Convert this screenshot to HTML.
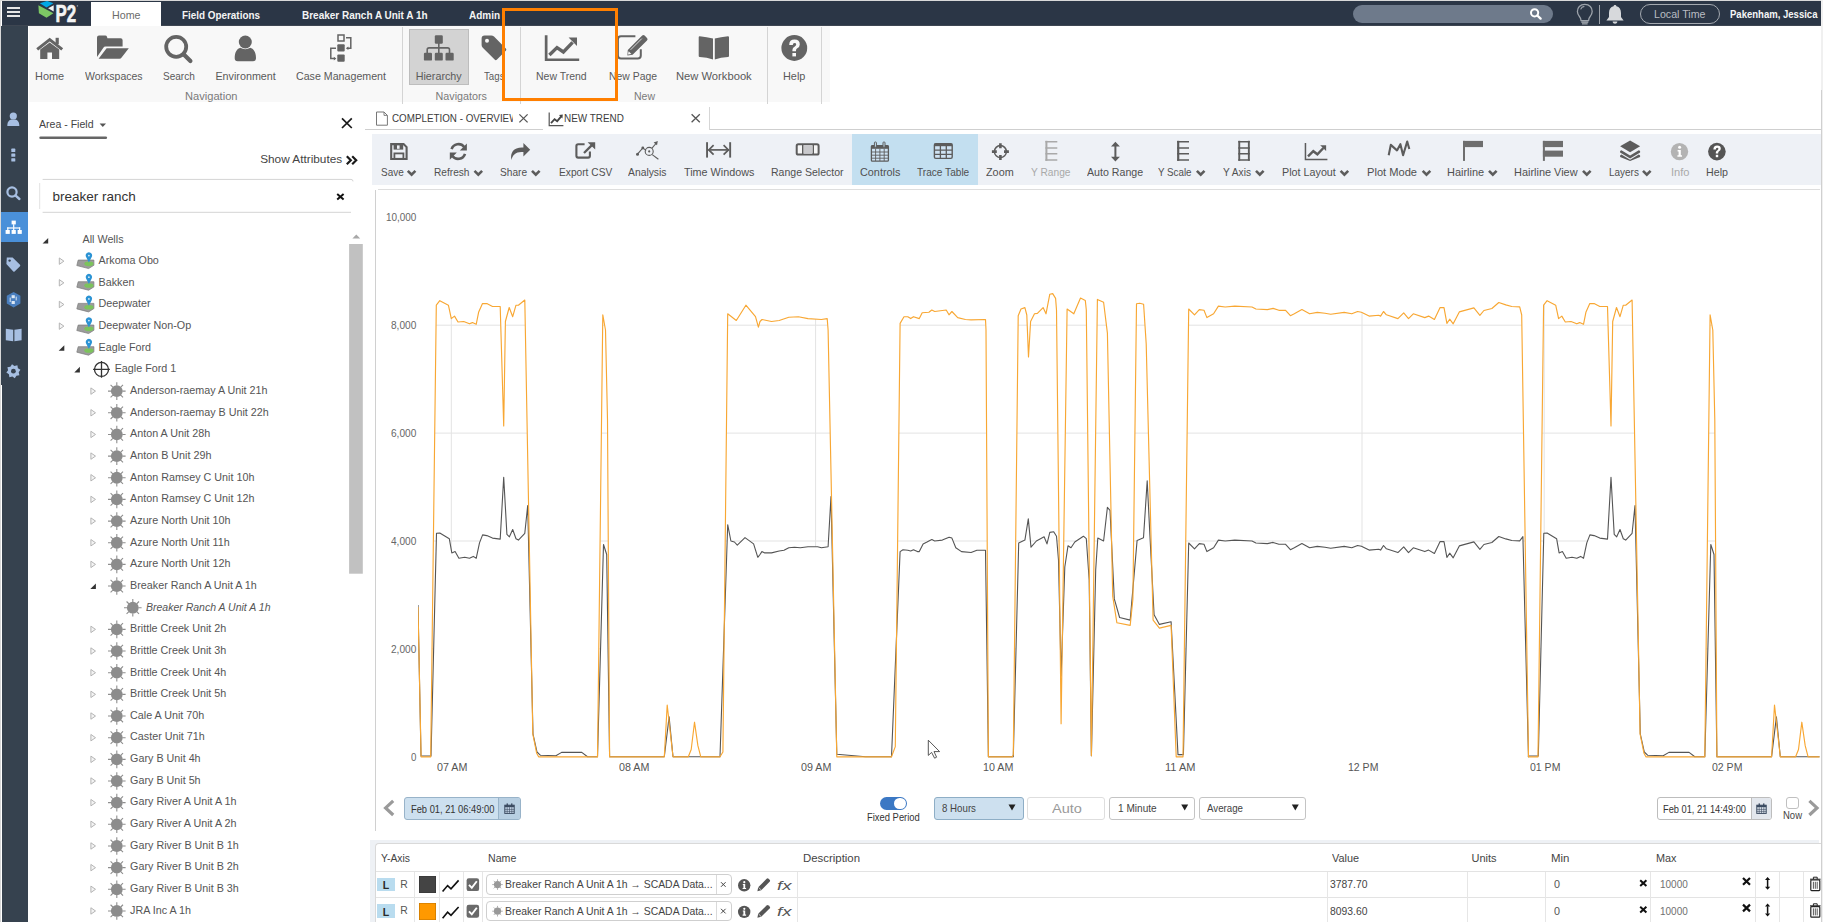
<!DOCTYPE html>
<html><head><meta charset="utf-8"><title>P2 Explorer - New Trend</title>
<style>
html,body{margin:0;padding:0;}
body{width:1823px;height:922px;overflow:hidden;position:relative;background:#fff;font-family:"Liberation Sans",sans-serif;}
.t{position:absolute;white-space:nowrap;line-height:1;transform-origin:0 0;}
.r{position:absolute;display:block;}
</style></head><body>

<div class="r" style="left:0px;top:0px;width:1823px;height:922px;background:#fff;"></div>
<div class="r" style="left:2px;top:1px;width:1819px;height:25px;background:#2b3646;"></div>
<div class="r" style="left:0px;top:0px;width:1823px;height:1px;background:#d9d9d9;"></div>
<div class="r" style="left:2px;top:25px;width:1819px;height:1px;background:#3e4652;"></div>
<div class="r" style="left:7px;top:6.5px;width:13px;height:2px;background:#e6e6e6;"></div>
<div class="r" style="left:7px;top:11px;width:13px;height:2px;background:#e6e6e6;"></div>
<div class="r" style="left:7px;top:15.3px;width:13px;height:2px;background:#e6e6e6;"></div>
<svg class="r" style="left:36px;top:0px;" width="46" height="26" viewBox="0 0 46 26">
<polygon points="3.9,3.3 11.1,0.9 17.4,3.3 10.5,7.6" fill="#00a7e6"/>
<polygon points="2.4,5.3 17.4,13.2 10.5,17.8 2.9,13.2" fill="#7dc864"/>
<polygon points="12.1,8.2 17.7,5.3 17.7,11.5" fill="#f4f4f4"/>
<text x="19.6" y="22" font-family="Liberation Sans" font-weight="bold" font-size="23.6" fill="#f4f4f4" stroke="#f4f4f4" stroke-width="0.7" textLength="20.6" lengthAdjust="spacingAndGlyphs">P2</text>
<circle cx="41.4" cy="5.9" r="0.8" fill="#8a9099"/>
</svg>
<div class="r" style="left:91px;top:2px;width:70px;height:25px;background:#fff;"></div>
<div class="t" style="left:111.55px;top:9.67px;font-size:10.9px;color:#6b6b6b;transform:scaleX(0.9803);">Home</div>
<div class="t" style="left:181.70px;top:9.67px;font-size:10.9px;color:#f4f4f4;font-weight:bold;transform:scaleX(0.9070);">Field Operations</div>
<div class="t" style="left:301.50px;top:9.67px;font-size:10.9px;color:#f4f4f4;font-weight:bold;transform:scaleX(0.9169);">Breaker Ranch A Unit A 1h</div>
<div class="t" style="left:468.70px;top:9.67px;font-size:10.9px;color:#f4f4f4;font-weight:bold;transform:scaleX(0.9172);">Admin</div>
<div class="r" style="left:1353px;top:4.6px;width:200px;height:18.4px;background:#6e7a8b;border-radius:10px;"></div>
<svg class="r" style="left:1529px;top:7px;" width="14" height="14" viewBox="0 0 14 14"><circle cx="5.6" cy="5.8" r="3.6" fill="none" stroke="#fff" stroke-width="2"/><line x1="8.3" y1="8.5" x2="11.6" y2="11.6" stroke="#fff" stroke-width="2.4" stroke-linecap="round"/></svg>
<svg class="r" style="left:1575px;top:3px;" width="20" height="22" viewBox="0 0 20 22"><path d="M9.8 1.4 C5 1.4 2.4 4.8 2.4 8.4 C2.4 11.6 4.6 13.2 5.6 15.4 L6 17.6 L13.6 17.6 L14 15.4 C15 13.2 17.2 11.6 17.2 8.4 C17.2 4.8 14.6 1.4 9.8 1.4 Z" fill="none" stroke="#9da3ab" stroke-width="1.3"/><path d="M5.6 6.4 C6.2 4.6 7.8 3.6 9.4 3.4" fill="none" stroke="#9da3ab" stroke-width="1.1"/><rect x="6.3" y="18.3" width="7" height="1.6" fill="#9da3ab"/><rect x="7" y="20.2" width="5.6" height="1.3" fill="#9da3ab"/></svg>
<div class="r" style="left:1599px;top:4.5px;width:1px;height:19px;background:#9aa0a8;"></div>
<svg class="r" style="left:1604px;top:3px;" width="22" height="22" viewBox="0 0 22 22"><path d="M11 2 C11.9 2 12.4 2.6 12.4 3.3 C15.5 4 17 6.6 17 10 L17 14 L19.6 17.6 L2.4 17.6 L5 14 L5 10 C5 6.6 6.5 4 9.6 3.3 C9.6 2.6 10.1 2 11 2 Z" fill="#d7d9dc"/><path d="M8.6 18.6 C8.8 20 9.8 20.8 11 20.8 C12.2 20.8 13.2 20 13.4 18.6 Z" fill="#d7d9dc"/></svg>
<div class="r" style="left:1640px;top:4.2px;width:78px;height:18.6px;background:transparent;border:1.2px solid #a4a9b0;border-radius:10px;box-sizing:border-box;width:80px;height:19.6px;"></div>
<div class="t" style="left:1654.45px;top:8.77px;font-size:10.9px;color:#b9bdc3;transform:scaleX(0.9772);">Local Time</div>
<div class="t" style="left:1730.00px;top:8.77px;font-size:10.9px;color:#f6f6f6;font-weight:bold;transform:scaleX(0.8752);">Pakenham, Jessica</div>
<div class="r" style="left:1.2px;top:26px;width:27.1px;height:896px;background:#36424f;"></div>
<div class="r" style="left:0px;top:0px;width:1.2px;height:922px;background:#d8d8d8;"></div>
<div class="r" style="left:1.2px;top:384.7px;width:0.8px;height:538px;background:#fff;"></div>
<div class="r" style="left:1821px;top:0px;width:2px;height:922px;background:#f0f0f0;"></div>
<svg class="r" style="left:2px;top:108px;" width="26" height="22" viewBox="0 0 26 22"><circle cx="11.3" cy="8" r="3.6" fill="#a7bfe2"/><path d="M5.3 18 C5.3 13.6 7.4 11.8 9.4 11.6 L13.2 11.6 C15.2 11.8 17.3 13.6 17.3 18 Z" fill="#a7bfe2"/></svg>
<svg class="r" style="left:2px;top:146px;" width="26" height="18" viewBox="0 0 26 18"><rect x="9.3" y="2.6" width="4" height="3.4" rx="0.6" fill="#a7bfe2"/><rect x="9.3" y="7.4" width="4" height="3.4" rx="0.6" fill="#a7bfe2"/><rect x="9.3" y="12.2" width="4" height="3.4" rx="0.6" fill="#a7bfe2"/></svg>
<svg class="r" style="left:2px;top:184px;" width="26" height="18" viewBox="0 0 26 18"><circle cx="10" cy="8" r="4.6" fill="none" stroke="#a7bfe2" stroke-width="2.2"/><line x1="13.4" y1="11.4" x2="17.4" y2="15" stroke="#a7bfe2" stroke-width="2.4" stroke-linecap="round"/></svg>
<div class="r" style="left:1.2px;top:212px;width:27.1px;height:30px;background:#4a90d9;"></div>
<svg class="r" style="left:2px;top:218px;" width="26" height="20" viewBox="0 0 26 20"><rect x="9.6" y="2.6" width="4.2" height="3.8" fill="#fff"/><rect x="11.1" y="6.2" width="1.2" height="3.4" fill="#fff"/><rect x="5.2" y="9.4" width="13" height="1.2" fill="#fff"/><rect x="5.2" y="9.4" width="1.2" height="3" fill="#fff"/><rect x="17" y="9.4" width="1.2" height="3" fill="#fff"/><rect x="11.1" y="9.4" width="1.2" height="3" fill="#fff"/><rect x="3.6" y="12" width="4.2" height="3.9" fill="#fff"/><rect x="9.6" y="12" width="4.2" height="3.9" fill="#fff"/><rect x="15.6" y="12" width="4.2" height="3.9" fill="#fff"/></svg>
<svg class="r" style="left:2px;top:254px;" width="26" height="20" viewBox="0 0 26 20"><path d="M4.8 3.6 L10.6 3.4 L18 10.8 Q18.6 11.5 18 12.2 L12.6 17.4 Q12 18 11.3 17.4 L4.4 10 Z" fill="#a7bfe2"/><circle cx="7.6" cy="6.6" r="1.2" fill="#36424f"/></svg>
<svg class="r" style="left:2px;top:290px;" width="26" height="20" viewBox="0 0 26 20"><polygon points="11.6,2 18.4,5.8 18.4,13.6 11.6,17.4 4.8,13.6 4.8,5.8" fill="#4a7fbf"/><rect x="9.6" y="5.2" width="3.2" height="3" fill="#dce8f5"/><rect x="9.6" y="11" width="3.2" height="3" fill="#dce8f5"/><path d="M8.2 7.6 L8.2 12 M14.2 6.6 L14.2 10.4" stroke="#dce8f5" stroke-width="1"/></svg>
<svg class="r" style="left:2px;top:326px;" width="26" height="18" viewBox="0 0 26 18"><path d="M3.8 2.8 L11.2 3.8 L11.2 15.2 L3.8 14.2 Z" fill="#a7bfe2"/><path d="M12.4 3.8 L19.6 2.8 L19.6 14.2 L12.4 15.2 Z" fill="#a7bfe2"/></svg>
<svg class="r" style="left:2px;top:362px;" width="26" height="20" viewBox="0 0 26 20"><polygon points="18.46,7.80 16.70,10.25 17.39,13.20 14.40,13.69 12.80,16.26 10.35,14.50 7.40,15.19 6.91,12.20 4.34,10.60 6.10,8.15 5.41,5.20 8.40,4.71 10.00,2.14 12.45,3.90 15.40,3.21 15.89,6.20" fill="#a7bfe2"/><circle cx="11.4" cy="9.2" r="2.4" fill="#36424f"/></svg>
<div class="r" style="left:28.5px;top:26px;width:801px;height:75.8px;background:#f8f8f8;"></div>
<div class="r" style="left:402.0px;top:27px;width:1px;height:77px;background:#d4d4d4;"></div>
<div class="r" style="left:519.6px;top:27px;width:1px;height:77px;background:#d4d4d4;"></div>
<div class="r" style="left:767.0px;top:27px;width:1px;height:77px;background:#d4d4d4;"></div>
<div class="r" style="left:821.1px;top:27px;width:1px;height:77px;background:#d4d4d4;"></div>
<div class="r" style="left:409px;top:29.2px;width:60px;height:56.2px;background:#d3d3d3;border:1px solid #bdbdbd;box-sizing:border-box;"></div>
<div class="t" style="left:35.45px;top:70.90px;font-size:10.75px;color:#5a5a5a;transform:scaleX(1.0149);">Home</div>
<div class="t" style="left:84.80px;top:70.90px;font-size:10.75px;color:#5a5a5a;transform:scaleX(0.9772);">Workspaces</div>
<div class="t" style="left:162.70px;top:70.90px;font-size:10.75px;color:#5a5a5a;transform:scaleX(0.9337);">Search</div>
<div class="t" style="left:215.45px;top:70.90px;font-size:10.75px;color:#5a5a5a;">Environment</div>
<div class="t" style="left:296.10px;top:70.90px;font-size:10.75px;color:#5a5a5a;transform:scaleX(0.9909);">Case Management</div>
<div class="t" style="left:415.70px;top:70.90px;font-size:10.75px;color:#5a5a5a;">Hierarchy</div>
<div class="t" style="left:484.25px;top:70.90px;font-size:10.75px;color:#5a5a5a;transform:scaleX(0.9028);">Tags</div>
<div class="t" style="left:536.45px;top:70.90px;font-size:10.75px;color:#5a5a5a;transform:scaleX(0.9754);">New Trend</div>
<div class="t" style="left:608.60px;top:70.90px;font-size:10.75px;color:#5a5a5a;transform:scaleX(0.9678);">New Page</div>
<div class="t" style="left:676.45px;top:70.90px;font-size:10.75px;color:#5a5a5a;transform:scaleX(1.0415);">New Workbook</div>
<div class="t" style="left:783.00px;top:70.90px;font-size:10.75px;color:#5a5a5a;transform:scaleX(1.0132);">Help</div>
<div class="t" style="left:184.75px;top:90.60px;font-size:10.75px;color:#7a7a7a;transform:scaleX(1.0336);">Navigation</div>
<div class="t" style="left:435.55px;top:90.60px;font-size:10.75px;color:#7a7a7a;">Navigators</div>
<div class="t" style="left:633.60px;top:90.60px;font-size:10.75px;color:#7a7a7a;transform:scaleX(0.9765);">New</div>
<svg class="r" style="left:0;top:0" width="1823" height="922" viewBox="0 0 1823 922">
<g fill="#646464" stroke="none">
 <!-- home -->
 <polyline points="37.2,49.4 49.7,39.6 62.2,49.4" fill="none" stroke="#646464" stroke-width="3" stroke-linejoin="miter"/>
 <rect x="55.6" y="37.8" width="3.2" height="6.4"/>
 <path d="M40.2 49.6 L49.7 42.6 L59.2 49.6 L59.2 59 L52 59 L52 52.4 L47.4 52.4 L47.4 59 L40.2 59 Z"/>
 <!-- workspaces folder -->
 <path d="M97 37.4 Q97 35.4 99 35.4 L105.2 35.4 Q106.6 35.4 107 36.8 L107.4 38.2 L120.6 38.2 Q122.6 38.2 122.6 40.2 L122.6 46.6 L105.6 46.6 Q104 46.6 103.2 48 L97 57 Z"/>
 <path d="M106.6 48.2 L128.8 48.2 L121.6 57.6 Q120.8 58.8 119.4 58.8 L98.6 58.8 Z"/>
 <!-- search -->
 <circle cx="176.2" cy="46.8" r="10" fill="none" stroke="#646464" stroke-width="3.8"/>
 <line x1="183.6" y1="54.2" x2="190.4" y2="61" stroke="#646464" stroke-width="4.2" stroke-linecap="round"/>
 <!-- environment -->
 <circle cx="245.3" cy="42" r="6.5"/>
 <path d="M234.7 58.2 C234.7 52 237.2 48.6 240.4 47.8 C243.2 49.6 247.4 49.6 250.2 47.8 C253.4 48.6 256 52 256 58.2 Q256 61.2 253 61.2 L237.7 61.2 Q234.7 61.2 234.7 58.2 Z"/>
 <!-- case management -->
 <rect x="338" y="35" width="6" height="6" fill="none" stroke="#646464" stroke-width="1.5"/>
 <rect x="337.3" y="44.2" width="7.4" height="7.2" rx="1"/>
 <rect x="337.3" y="54.4" width="7.4" height="7.4" rx="1"/>
 <path d="M346 37.8 L350.8 37.8 L350.8 48.2 L347.6 48.2" fill="none" stroke="#646464" stroke-width="1.5"/>
 <path d="M345.8 48.2 L348.4 46.4 L348.4 50 Z"/>
 <path d="M336 48.2 L330.8 48.2 L330.8 58.6 L334.4 58.6" fill="none" stroke="#646464" stroke-width="1.5"/>
 <path d="M336.4 58.6 L333.8 56.8 L333.8 60.4 Z"/>
 <!-- hierarchy -->
 <rect x="434.8" y="35.3" width="8" height="8.4" rx="1.2"/>
 <rect x="438" y="43" width="1.6" height="5.4"/>
 <path d="M427.2 53.4 L427.2 49.8 Q427.2 47.9 429.1 47.9 L447.6 47.9 Q449.5 47.9 449.5 49.8 L449.5 53.4" fill="none" stroke="#646464" stroke-width="1.6"/>
 <rect x="438" y="47.9" width="1.6" height="5.4"/>
 <rect x="423.9" y="52.8" width="8.1" height="7.8" rx="1.2"/>
 <rect x="434.8" y="52.8" width="8" height="7.8" rx="1.2"/>
 <rect x="445.5" y="52.8" width="8.2" height="7.8" rx="1.2"/>
 <!-- tags -->
 <path d="M481.6 38.4 Q481.6 35.4 484.6 35.4 L491.2 35.4 Q492.8 35.4 494 36.6 L505.8 48.4 Q507 49.6 505.8 50.8 L497 59.6 Q495.8 60.8 494.6 59.6 L482.8 47.8 Q481.6 46.6 481.6 45 Z"/>
 <circle cx="487" cy="40.8" r="2" fill="#f8f8f8"/>
 <!-- new trend -->
 <path d="M544.8 35.3 L547.5 35.3 L547.5 58.4 L579.2 58.4 L579.2 61 L544.8 61 Z"/>
 <polyline points="549.4,55 557,47.6 563.4,52 572.6,42.4" fill="none" stroke="#646464" stroke-width="3.4" stroke-linejoin="miter"/>
 <path d="M568.6 37.6 L577 37.6 L577 46 Z"/>
 <!-- new page -->
 <path d="M635.4 36.3 L621 36.3 Q617.9 36.3 617.9 39.4 L617.9 55.5 Q617.9 58.6 621 58.6 L637.7 58.6 Q640.8 58.6 640.8 55.5 L640.8 49.2" fill="none" stroke="#646464" stroke-width="2"/>
 <path d="M627.8 50 L642.2 35.6 Q643.4 34.4 644.6 35.6 L647 38 Q648.2 39.2 647 40.4 L632.6 54.8 L627.4 55.4 Z"/>
 <path d="M628.6 51.2 L631.4 54 L628 54.6 Z" fill="#f8f8f8"/>
 <line x1="630.6" y1="49.8" x2="641.8" y2="38.6" stroke="#f8f8f8" stroke-width="0.8"/>
 <!-- new workbook -->
 <path d="M698.7 37.2 Q698.7 36.2 699.7 36.2 Q707 36.8 713 38.6 L713 59.6 Q707 57.4 699.7 57 Q698.7 57 698.7 56 Z"/>
 <path d="M729 37.2 Q729 36.2 728 36.2 Q720.7 36.8 714.8 38.6 L714.8 59.6 Q720.7 57.4 728 57 Q729 57 729 56 Z"/>
 <!-- help -->
 <circle cx="794.3" cy="48" r="12.9"/>
 <path d="M789.2 45 Q789.2 39.6 794.6 39.6 Q799.8 39.6 799.8 44.4 Q799.8 47 797 48.4 Q796 49 796 50.4 L796 51.2 L792.4 51.2 L792.4 50 Q792.4 47.6 794.8 46.4 Q796.2 45.6 796.2 44.4 Q796.2 43 794.6 43 Q792.8 43 792.8 45 Z" fill="#f8f8f8"/>
 <rect x="792.4" y="53" width="3.6" height="3.4" fill="#f8f8f8"/>
</g>
<rect x="503.5" y="9.5" width="113" height="90" fill="none" stroke="#ff7f00" stroke-width="3"/>
</svg>
<div class="t" style="left:39.40px;top:118.90px;font-size:10.75px;color:#444;transform:scaleX(0.9810);">Area - Field</div>
<div class="t" style="left:260.20px;top:154.31px;font-size:11.8px;color:#444;">Show Attributes</div>
<div class="t" style="left:52.40px;top:190.27px;font-size:13.5px;color:#333;">breaker ranch</div>
<div class="t" style="left:82.50px;top:234.30px;font-size:10.75px;color:#555;">All Wells</div>
<div class="t" style="left:98.50px;top:254.96px;font-size:10.75px;color:#555;">Arkoma Obo</div>
<div class="t" style="left:98.50px;top:276.62px;font-size:10.75px;color:#555;">Bakken</div>
<div class="t" style="left:98.50px;top:298.28px;font-size:10.75px;color:#555;">Deepwater</div>
<div class="t" style="left:98.50px;top:319.94px;font-size:10.75px;color:#555;">Deepwater Non-Op</div>
<div class="t" style="left:98.50px;top:341.60px;font-size:10.75px;color:#555;">Eagle Ford</div>
<div class="t" style="left:114.70px;top:363.26px;font-size:10.75px;color:#555;">Eagle Ford 1</div>
<div class="t" style="left:130.10px;top:384.92px;font-size:10.75px;color:#555;">Anderson-raemay A Unit 21h</div>
<div class="t" style="left:130.10px;top:406.58px;font-size:10.75px;color:#555;">Anderson-raemay B Unit 22h</div>
<div class="t" style="left:130.10px;top:428.24px;font-size:10.75px;color:#555;">Anton A Unit 28h</div>
<div class="t" style="left:130.10px;top:449.90px;font-size:10.75px;color:#555;">Anton B Unit 29h</div>
<div class="t" style="left:130.10px;top:471.56px;font-size:10.75px;color:#555;">Anton Ramsey C Unit 10h</div>
<div class="t" style="left:130.10px;top:493.22px;font-size:10.75px;color:#555;">Anton Ramsey C Unit 12h</div>
<div class="t" style="left:130.10px;top:514.88px;font-size:10.75px;color:#555;">Azure North Unit 10h</div>
<div class="t" style="left:130.10px;top:536.54px;font-size:10.75px;color:#555;">Azure North Unit 11h</div>
<div class="t" style="left:130.10px;top:558.20px;font-size:10.75px;color:#555;">Azure North Unit 12h</div>
<div class="t" style="left:130.10px;top:579.86px;font-size:10.75px;color:#555;">Breaker Ranch A Unit A 1h</div>
<div class="t" style="left:145.80px;top:601.52px;font-size:10.75px;color:#555;font-style:italic;transform:scaleX(0.9767);">Breaker Ranch A Unit A 1h</div>
<div class="t" style="left:130.10px;top:623.18px;font-size:10.75px;color:#555;">Brittle Creek Unit 2h</div>
<div class="t" style="left:130.10px;top:644.84px;font-size:10.75px;color:#555;">Brittle Creek Unit 3h</div>
<div class="t" style="left:130.10px;top:666.50px;font-size:10.75px;color:#555;">Brittle Creek Unit 4h</div>
<div class="t" style="left:130.10px;top:688.16px;font-size:10.75px;color:#555;">Brittle Creek Unit 5h</div>
<div class="t" style="left:130.10px;top:709.82px;font-size:10.75px;color:#555;">Cale A Unit 70h</div>
<div class="t" style="left:130.10px;top:731.48px;font-size:10.75px;color:#555;">Caster Unit 71h</div>
<div class="t" style="left:130.10px;top:753.14px;font-size:10.75px;color:#555;">Gary B Unit 4h</div>
<div class="t" style="left:130.10px;top:774.80px;font-size:10.75px;color:#555;">Gary B Unit 5h</div>
<div class="t" style="left:130.10px;top:796.46px;font-size:10.75px;color:#555;">Gary River A Unit A 1h</div>
<div class="t" style="left:130.10px;top:818.12px;font-size:10.75px;color:#555;">Gary River A Unit A 2h</div>
<div class="t" style="left:130.10px;top:839.78px;font-size:10.75px;color:#555;">Gary River B Unit B 1h</div>
<div class="t" style="left:130.10px;top:861.44px;font-size:10.75px;color:#555;">Gary River B Unit B 2h</div>
<div class="t" style="left:130.10px;top:883.10px;font-size:10.75px;color:#555;">Gary River B Unit B 3h</div>
<div class="t" style="left:130.10px;top:904.76px;font-size:10.75px;color:#555;">JRA Inc A 1h</div>
<svg class="r" style="left:0;top:0" width="372" height="922" viewBox="0 0 372 922"><path d="M99.6 123.6 L106 123.6 L102.8 127 Z" fill="#555"/><line x1="40.6" y1="137.8" x2="105.8" y2="137.8" stroke="#666" stroke-width="2.6" stroke-linecap="round"/><path d="M342 118.3 L351.8 128 M351.8 118.3 L342 128" stroke="#1a1a1a" stroke-width="1.7"/><path d="M346.8 156.2 L350.8 160.2 L346.8 164.2 M352.2 156.2 L356.2 160.2 L352.2 164.2" fill="none" stroke="#1a1a1a" stroke-width="2.2"/><path d="M42.6 179.4 L351 179.4 Q353 179.4 353 181.4" fill="none" stroke="#d4d4d4" stroke-width="1"/><line x1="42.6" y1="212.3" x2="351" y2="212.3" stroke="#d4d4d4" stroke-width="1"/><line x1="39.7" y1="183" x2="39.7" y2="209" stroke="#e2e2e2" stroke-width="1"/><path d="M337.2 194 L343.6 199.4 M343.6 194 L337.2 199.4" stroke="#111" stroke-width="2"/><path d="M352.4 238.4 L356.3 234.4 L360.2 238.4 Z" fill="#a8a8a8"/><rect x="349.1" y="244" width="13.7" height="329.7" fill="#c1c1c1"/><path d="M48.20 237.90 L48.20 243.50 L42.60 243.50 Z" fill="#333"/><path d="M59.30 257.96 L63.90 261.16 L59.30 264.36 Z" fill="#f4f4f4" stroke="#b4b4b4" stroke-width="1"/><path d="M78.2 260.06 L93.9 260.06 L93.9 265.26 L88.6 268.56 L76.8 265.56 Z" fill="#9c9c9c" stroke="#7a7a7a" stroke-width="0.7" stroke-linejoin="round"/><ellipse cx="88.9" cy="263.86" rx="4.6" ry="2.3" fill="#7cc35c"/><path d="M88.9 262.46 L86.1 256.96 A3.2 3.2 0 1 1 91.7 256.96 Z" fill="#2b93d4"/><circle cx="88.9" cy="255.56" r="0.9" fill="#d9ecf8"/><path d="M59.30 279.62 L63.90 282.82 L59.30 286.02 Z" fill="#f4f4f4" stroke="#b4b4b4" stroke-width="1"/><path d="M78.2 281.72 L93.9 281.72 L93.9 286.92 L88.6 290.22 L76.8 287.22 Z" fill="#9c9c9c" stroke="#7a7a7a" stroke-width="0.7" stroke-linejoin="round"/><ellipse cx="88.9" cy="285.52" rx="4.6" ry="2.3" fill="#7cc35c"/><path d="M88.9 284.12 L86.1 278.62 A3.2 3.2 0 1 1 91.7 278.62 Z" fill="#2b93d4"/><circle cx="88.9" cy="277.22" r="0.9" fill="#d9ecf8"/><path d="M59.30 301.28 L63.90 304.48 L59.30 307.68 Z" fill="#f4f4f4" stroke="#b4b4b4" stroke-width="1"/><path d="M78.2 303.38 L93.9 303.38 L93.9 308.58 L88.6 311.88 L76.8 308.88 Z" fill="#9c9c9c" stroke="#7a7a7a" stroke-width="0.7" stroke-linejoin="round"/><ellipse cx="88.9" cy="307.18" rx="4.6" ry="2.3" fill="#7cc35c"/><path d="M88.9 305.78 L86.1 300.28 A3.2 3.2 0 1 1 91.7 300.28 Z" fill="#2b93d4"/><circle cx="88.9" cy="298.88" r="0.9" fill="#d9ecf8"/><path d="M59.30 322.94 L63.90 326.14 L59.30 329.34 Z" fill="#f4f4f4" stroke="#b4b4b4" stroke-width="1"/><path d="M78.2 325.04 L93.9 325.04 L93.9 330.24 L88.6 333.54 L76.8 330.54 Z" fill="#9c9c9c" stroke="#7a7a7a" stroke-width="0.7" stroke-linejoin="round"/><ellipse cx="88.9" cy="328.84" rx="4.6" ry="2.3" fill="#7cc35c"/><path d="M88.9 327.44 L86.1 321.94 A3.2 3.2 0 1 1 91.7 321.94 Z" fill="#2b93d4"/><circle cx="88.9" cy="320.54" r="0.9" fill="#d9ecf8"/><path d="M64.30 345.20 L64.30 350.80 L58.70 350.80 Z" fill="#333"/><path d="M78.2 346.70 L93.9 346.70 L93.9 351.90 L88.6 355.20 L76.8 352.20 Z" fill="#9c9c9c" stroke="#7a7a7a" stroke-width="0.7" stroke-linejoin="round"/><ellipse cx="88.9" cy="350.50" rx="4.6" ry="2.3" fill="#7cc35c"/><path d="M88.9 349.10 L86.1 343.60 A3.2 3.2 0 1 1 91.7 343.60 Z" fill="#2b93d4"/><circle cx="88.9" cy="342.20" r="0.9" fill="#d9ecf8"/><path d="M79.90 366.86 L79.90 372.46 L74.30 372.46 Z" fill="#333"/><circle cx="101.5" cy="369.46" r="7" fill="none" stroke="#333" stroke-width="1.3"/><path d="M93.1 369.46H109.9M101.5 361.06V377.86" stroke="#333" stroke-width="1.3"/><path d="M90.90 387.92 L95.50 391.12 L90.90 394.32 Z" fill="#f4f4f4" stroke="#b4b4b4" stroke-width="1"/><circle cx="116.80" cy="391.12" r="5.9" fill="#8c8c8c"/><path d="M122.40 391.12L125.60 391.12M120.76 395.08L123.02 397.34M116.80 396.72L116.80 399.92M112.84 395.08L110.58 397.34M111.20 391.12L108.00 391.12M112.84 387.16L110.58 384.90M116.80 385.52L116.80 382.32M120.76 387.16L123.02 384.90" stroke="#8e8e8e" stroke-width="1.1"/><path d="M90.90 409.58 L95.50 412.78 L90.90 415.98 Z" fill="#f4f4f4" stroke="#b4b4b4" stroke-width="1"/><circle cx="116.80" cy="412.78" r="5.9" fill="#8c8c8c"/><path d="M122.40 412.78L125.60 412.78M120.76 416.74L123.02 419.00M116.80 418.38L116.80 421.58M112.84 416.74L110.58 419.00M111.20 412.78L108.00 412.78M112.84 408.82L110.58 406.56M116.80 407.18L116.80 403.98M120.76 408.82L123.02 406.56" stroke="#8e8e8e" stroke-width="1.1"/><path d="M90.90 431.24 L95.50 434.44 L90.90 437.64 Z" fill="#f4f4f4" stroke="#b4b4b4" stroke-width="1"/><circle cx="116.80" cy="434.44" r="5.9" fill="#8c8c8c"/><path d="M122.40 434.44L125.60 434.44M120.76 438.40L123.02 440.66M116.80 440.04L116.80 443.24M112.84 438.40L110.58 440.66M111.20 434.44L108.00 434.44M112.84 430.48L110.58 428.22M116.80 428.84L116.80 425.64M120.76 430.48L123.02 428.22" stroke="#8e8e8e" stroke-width="1.1"/><path d="M90.90 452.90 L95.50 456.10 L90.90 459.30 Z" fill="#f4f4f4" stroke="#b4b4b4" stroke-width="1"/><circle cx="116.80" cy="456.10" r="5.9" fill="#8c8c8c"/><path d="M122.40 456.10L125.60 456.10M120.76 460.06L123.02 462.32M116.80 461.70L116.80 464.90M112.84 460.06L110.58 462.32M111.20 456.10L108.00 456.10M112.84 452.14L110.58 449.88M116.80 450.50L116.80 447.30M120.76 452.14L123.02 449.88" stroke="#8e8e8e" stroke-width="1.1"/><path d="M90.90 474.56 L95.50 477.76 L90.90 480.96 Z" fill="#f4f4f4" stroke="#b4b4b4" stroke-width="1"/><circle cx="116.80" cy="477.76" r="5.9" fill="#8c8c8c"/><path d="M122.40 477.76L125.60 477.76M120.76 481.72L123.02 483.98M116.80 483.36L116.80 486.56M112.84 481.72L110.58 483.98M111.20 477.76L108.00 477.76M112.84 473.80L110.58 471.54M116.80 472.16L116.80 468.96M120.76 473.80L123.02 471.54" stroke="#8e8e8e" stroke-width="1.1"/><path d="M90.90 496.22 L95.50 499.42 L90.90 502.62 Z" fill="#f4f4f4" stroke="#b4b4b4" stroke-width="1"/><circle cx="116.80" cy="499.42" r="5.9" fill="#8c8c8c"/><path d="M122.40 499.42L125.60 499.42M120.76 503.38L123.02 505.64M116.80 505.02L116.80 508.22M112.84 503.38L110.58 505.64M111.20 499.42L108.00 499.42M112.84 495.46L110.58 493.20M116.80 493.82L116.80 490.62M120.76 495.46L123.02 493.20" stroke="#8e8e8e" stroke-width="1.1"/><path d="M90.90 517.88 L95.50 521.08 L90.90 524.28 Z" fill="#f4f4f4" stroke="#b4b4b4" stroke-width="1"/><circle cx="116.80" cy="521.08" r="5.9" fill="#8c8c8c"/><path d="M122.40 521.08L125.60 521.08M120.76 525.04L123.02 527.30M116.80 526.68L116.80 529.88M112.84 525.04L110.58 527.30M111.20 521.08L108.00 521.08M112.84 517.12L110.58 514.86M116.80 515.48L116.80 512.28M120.76 517.12L123.02 514.86" stroke="#8e8e8e" stroke-width="1.1"/><path d="M90.90 539.54 L95.50 542.74 L90.90 545.94 Z" fill="#f4f4f4" stroke="#b4b4b4" stroke-width="1"/><circle cx="116.80" cy="542.74" r="5.9" fill="#8c8c8c"/><path d="M122.40 542.74L125.60 542.74M120.76 546.70L123.02 548.96M116.80 548.34L116.80 551.54M112.84 546.70L110.58 548.96M111.20 542.74L108.00 542.74M112.84 538.78L110.58 536.52M116.80 537.14L116.80 533.94M120.76 538.78L123.02 536.52" stroke="#8e8e8e" stroke-width="1.1"/><path d="M90.90 561.20 L95.50 564.40 L90.90 567.60 Z" fill="#f4f4f4" stroke="#b4b4b4" stroke-width="1"/><circle cx="116.80" cy="564.40" r="5.9" fill="#8c8c8c"/><path d="M122.40 564.40L125.60 564.40M120.76 568.36L123.02 570.62M116.80 570.00L116.80 573.20M112.84 568.36L110.58 570.62M111.20 564.40L108.00 564.40M112.84 560.44L110.58 558.18M116.80 558.80L116.80 555.60M120.76 560.44L123.02 558.18" stroke="#8e8e8e" stroke-width="1.1"/><path d="M95.90 583.46 L95.90 589.06 L90.30 589.06 Z" fill="#333"/><circle cx="116.80" cy="586.06" r="5.9" fill="#8c8c8c"/><path d="M122.40 586.06L125.60 586.06M120.76 590.02L123.02 592.28M116.80 591.66L116.80 594.86M112.84 590.02L110.58 592.28M111.20 586.06L108.00 586.06M112.84 582.10L110.58 579.84M116.80 580.46L116.80 577.26M120.76 582.10L123.02 579.84" stroke="#8e8e8e" stroke-width="1.1"/><circle cx="132.80" cy="607.72" r="5.9" fill="#8c8c8c"/><path d="M138.40 607.72L141.60 607.72M136.76 611.68L139.02 613.94M132.80 613.32L132.80 616.52M128.84 611.68L126.58 613.94M127.20 607.72L124.00 607.72M128.84 603.76L126.58 601.50M132.80 602.12L132.80 598.92M136.76 603.76L139.02 601.50" stroke="#8e8e8e" stroke-width="1.1"/><path d="M90.90 626.18 L95.50 629.38 L90.90 632.58 Z" fill="#f4f4f4" stroke="#b4b4b4" stroke-width="1"/><circle cx="116.80" cy="629.38" r="5.9" fill="#8c8c8c"/><path d="M122.40 629.38L125.60 629.38M120.76 633.34L123.02 635.60M116.80 634.98L116.80 638.18M112.84 633.34L110.58 635.60M111.20 629.38L108.00 629.38M112.84 625.42L110.58 623.16M116.80 623.78L116.80 620.58M120.76 625.42L123.02 623.16" stroke="#8e8e8e" stroke-width="1.1"/><path d="M90.90 647.84 L95.50 651.04 L90.90 654.24 Z" fill="#f4f4f4" stroke="#b4b4b4" stroke-width="1"/><circle cx="116.80" cy="651.04" r="5.9" fill="#8c8c8c"/><path d="M122.40 651.04L125.60 651.04M120.76 655.00L123.02 657.26M116.80 656.64L116.80 659.84M112.84 655.00L110.58 657.26M111.20 651.04L108.00 651.04M112.84 647.08L110.58 644.82M116.80 645.44L116.80 642.24M120.76 647.08L123.02 644.82" stroke="#8e8e8e" stroke-width="1.1"/><path d="M90.90 669.50 L95.50 672.70 L90.90 675.90 Z" fill="#f4f4f4" stroke="#b4b4b4" stroke-width="1"/><circle cx="116.80" cy="672.70" r="5.9" fill="#8c8c8c"/><path d="M122.40 672.70L125.60 672.70M120.76 676.66L123.02 678.92M116.80 678.30L116.80 681.50M112.84 676.66L110.58 678.92M111.20 672.70L108.00 672.70M112.84 668.74L110.58 666.48M116.80 667.10L116.80 663.90M120.76 668.74L123.02 666.48" stroke="#8e8e8e" stroke-width="1.1"/><path d="M90.90 691.16 L95.50 694.36 L90.90 697.56 Z" fill="#f4f4f4" stroke="#b4b4b4" stroke-width="1"/><circle cx="116.80" cy="694.36" r="5.9" fill="#8c8c8c"/><path d="M122.40 694.36L125.60 694.36M120.76 698.32L123.02 700.58M116.80 699.96L116.80 703.16M112.84 698.32L110.58 700.58M111.20 694.36L108.00 694.36M112.84 690.40L110.58 688.14M116.80 688.76L116.80 685.56M120.76 690.40L123.02 688.14" stroke="#8e8e8e" stroke-width="1.1"/><path d="M90.90 712.82 L95.50 716.02 L90.90 719.22 Z" fill="#f4f4f4" stroke="#b4b4b4" stroke-width="1"/><circle cx="116.80" cy="716.02" r="5.9" fill="#8c8c8c"/><path d="M122.40 716.02L125.60 716.02M120.76 719.98L123.02 722.24M116.80 721.62L116.80 724.82M112.84 719.98L110.58 722.24M111.20 716.02L108.00 716.02M112.84 712.06L110.58 709.80M116.80 710.42L116.80 707.22M120.76 712.06L123.02 709.80" stroke="#8e8e8e" stroke-width="1.1"/><path d="M90.90 734.48 L95.50 737.68 L90.90 740.88 Z" fill="#f4f4f4" stroke="#b4b4b4" stroke-width="1"/><circle cx="116.80" cy="737.68" r="5.9" fill="#8c8c8c"/><path d="M122.40 737.68L125.60 737.68M120.76 741.64L123.02 743.90M116.80 743.28L116.80 746.48M112.84 741.64L110.58 743.90M111.20 737.68L108.00 737.68M112.84 733.72L110.58 731.46M116.80 732.08L116.80 728.88M120.76 733.72L123.02 731.46" stroke="#8e8e8e" stroke-width="1.1"/><path d="M90.90 756.14 L95.50 759.34 L90.90 762.54 Z" fill="#f4f4f4" stroke="#b4b4b4" stroke-width="1"/><circle cx="116.80" cy="759.34" r="5.9" fill="#8c8c8c"/><path d="M122.40 759.34L125.60 759.34M120.76 763.30L123.02 765.56M116.80 764.94L116.80 768.14M112.84 763.30L110.58 765.56M111.20 759.34L108.00 759.34M112.84 755.38L110.58 753.12M116.80 753.74L116.80 750.54M120.76 755.38L123.02 753.12" stroke="#8e8e8e" stroke-width="1.1"/><path d="M90.90 777.80 L95.50 781.00 L90.90 784.20 Z" fill="#f4f4f4" stroke="#b4b4b4" stroke-width="1"/><circle cx="116.80" cy="781.00" r="5.9" fill="#8c8c8c"/><path d="M122.40 781.00L125.60 781.00M120.76 784.96L123.02 787.22M116.80 786.60L116.80 789.80M112.84 784.96L110.58 787.22M111.20 781.00L108.00 781.00M112.84 777.04L110.58 774.78M116.80 775.40L116.80 772.20M120.76 777.04L123.02 774.78" stroke="#8e8e8e" stroke-width="1.1"/><path d="M90.90 799.46 L95.50 802.66 L90.90 805.86 Z" fill="#f4f4f4" stroke="#b4b4b4" stroke-width="1"/><circle cx="116.80" cy="802.66" r="5.9" fill="#8c8c8c"/><path d="M122.40 802.66L125.60 802.66M120.76 806.62L123.02 808.88M116.80 808.26L116.80 811.46M112.84 806.62L110.58 808.88M111.20 802.66L108.00 802.66M112.84 798.70L110.58 796.44M116.80 797.06L116.80 793.86M120.76 798.70L123.02 796.44" stroke="#8e8e8e" stroke-width="1.1"/><path d="M90.90 821.12 L95.50 824.32 L90.90 827.52 Z" fill="#f4f4f4" stroke="#b4b4b4" stroke-width="1"/><circle cx="116.80" cy="824.32" r="5.9" fill="#8c8c8c"/><path d="M122.40 824.32L125.60 824.32M120.76 828.28L123.02 830.54M116.80 829.92L116.80 833.12M112.84 828.28L110.58 830.54M111.20 824.32L108.00 824.32M112.84 820.36L110.58 818.10M116.80 818.72L116.80 815.52M120.76 820.36L123.02 818.10" stroke="#8e8e8e" stroke-width="1.1"/><path d="M90.90 842.78 L95.50 845.98 L90.90 849.18 Z" fill="#f4f4f4" stroke="#b4b4b4" stroke-width="1"/><circle cx="116.80" cy="845.98" r="5.9" fill="#8c8c8c"/><path d="M122.40 845.98L125.60 845.98M120.76 849.94L123.02 852.20M116.80 851.58L116.80 854.78M112.84 849.94L110.58 852.20M111.20 845.98L108.00 845.98M112.84 842.02L110.58 839.76M116.80 840.38L116.80 837.18M120.76 842.02L123.02 839.76" stroke="#8e8e8e" stroke-width="1.1"/><path d="M90.90 864.44 L95.50 867.64 L90.90 870.84 Z" fill="#f4f4f4" stroke="#b4b4b4" stroke-width="1"/><circle cx="116.80" cy="867.64" r="5.9" fill="#8c8c8c"/><path d="M122.40 867.64L125.60 867.64M120.76 871.60L123.02 873.86M116.80 873.24L116.80 876.44M112.84 871.60L110.58 873.86M111.20 867.64L108.00 867.64M112.84 863.68L110.58 861.42M116.80 862.04L116.80 858.84M120.76 863.68L123.02 861.42" stroke="#8e8e8e" stroke-width="1.1"/><path d="M90.90 886.10 L95.50 889.30 L90.90 892.50 Z" fill="#f4f4f4" stroke="#b4b4b4" stroke-width="1"/><circle cx="116.80" cy="889.30" r="5.9" fill="#8c8c8c"/><path d="M122.40 889.30L125.60 889.30M120.76 893.26L123.02 895.52M116.80 894.90L116.80 898.10M112.84 893.26L110.58 895.52M111.20 889.30L108.00 889.30M112.84 885.34L110.58 883.08M116.80 883.70L116.80 880.50M120.76 885.34L123.02 883.08" stroke="#8e8e8e" stroke-width="1.1"/><path d="M90.90 907.76 L95.50 910.96 L90.90 914.16 Z" fill="#f4f4f4" stroke="#b4b4b4" stroke-width="1"/><circle cx="116.80" cy="910.96" r="5.9" fill="#8c8c8c"/><path d="M122.40 910.96L125.60 910.96M120.76 914.92L123.02 917.18M116.80 916.56L116.80 919.76M112.84 914.92L110.58 917.18M111.20 910.96L108.00 910.96M112.84 907.00L110.58 904.74M116.80 905.36L116.80 902.16M120.76 907.00L123.02 904.74" stroke="#8e8e8e" stroke-width="1.1"/></svg>
<div class="r" style="left:365px;top:129.1px;width:177.7px;height:1px;background:#cfcfcf;"></div>
<div class="r" style="left:709.5px;top:129.1px;width:1111px;height:1px;background:#cfcfcf;"></div>
<div class="r" style="left:709px;top:107px;width:1px;height:22.6px;background:#d6d6d6;"></div>
<div class="r" style="left:1820.5px;top:90px;width:1px;height:832px;background:#d0d0d0;"></div>
<div class="r" style="left:392px;top:108px;width:121px;height:20px;overflow:hidden;">
<div class="t" style="left:0;top:4.79px;font-size:11px;color:#3c3c3c;transform:scaleX(0.893);">COMPLETION - OVERVIEW</div>
</div>
<div class="t" style="left:564.40px;top:112.79px;font-size:11px;color:#3c3c3c;transform:scaleX(0.9005);">NEW TREND</div>
<svg class="r" style="left:0;top:0" width="1823" height="200" viewBox="0 0 1823 200">
<path d="M376.5 112 L384 112 L387.4 115.4 L387.4 125.2 L376.5 125.2 Z" fill="#fff" stroke="#777" stroke-width="1"/>
<path d="M384 112 L384 115.4 L387.4 115.4" fill="none" stroke="#777" stroke-width="0.9"/>
<path d="M519.4 114.4 L527.6 122.4 M527.6 114.4 L519.4 122.4" stroke="#555" stroke-width="1.3"/>
<path d="M691.6 114.2 L699.8 122.2 M699.8 114.2 L691.6 122.2" stroke="#555" stroke-width="1.3"/>
<path d="M549.2 112.6 L549.2 125.6 L563.4 125.6" fill="none" stroke="#555" stroke-width="1.2"/>
<polyline points="551,123.2 554.6,119.2 557.2,121.2 561.2,116.4" fill="none" stroke="#444" stroke-width="1.8"/>
<path d="M559 115 L562.8 114.6 L562.4 118.4 Z" fill="#444"/>
</svg>
<div class="r" style="left:372px;top:134.3px;width:1448.5px;height:50.4px;background:#eef1f6;"></div>
<div class="r" style="left:852px;top:134.3px;width:126px;height:50.4px;background:#c3dff0;"></div>
<div class="r" style="left:377.8px;top:189px;width:1442.7px;height:1px;background:#dedede;"></div>
<div class="t" style="left:380.70px;top:166.52px;font-size:11.2px;color:#505050;transform:scaleX(0.8892);">Save</div>
<div class="t" style="left:433.50px;top:166.52px;font-size:11.2px;color:#505050;transform:scaleX(0.9053);">Refresh</div>
<div class="t" style="left:499.80px;top:166.52px;font-size:11.2px;color:#505050;transform:scaleX(0.9068);">Share</div>
<div class="t" style="left:558.50px;top:166.52px;font-size:11.2px;color:#505050;transform:scaleX(0.9110);">Export CSV</div>
<div class="t" style="left:628.20px;top:166.52px;font-size:11.2px;color:#505050;transform:scaleX(0.9232);">Analysis</div>
<div class="t" style="left:683.90px;top:166.52px;font-size:11.2px;color:#505050;transform:scaleX(0.9642);">Time Windows</div>
<div class="t" style="left:771.10px;top:166.52px;font-size:11.2px;color:#505050;transform:scaleX(0.9417);">Range Selector</div>
<div class="t" style="left:860.00px;top:166.52px;font-size:11.2px;color:#505050;transform:scaleX(0.9688);">Controls</div>
<div class="t" style="left:917.20px;top:166.52px;font-size:11.2px;color:#505050;transform:scaleX(0.9034);">Trace Table</div>
<div class="t" style="left:986.30px;top:166.52px;font-size:11.2px;color:#505050;transform:scaleX(0.9676);">Zoom</div>
<div class="t" style="left:1031.00px;top:166.52px;font-size:11.2px;color:#a9a9a9;transform:scaleX(0.9105);">Y Range</div>
<div class="t" style="left:1087.30px;top:166.52px;font-size:11.2px;color:#505050;transform:scaleX(0.9501);">Auto Range</div>
<div class="t" style="left:1158.40px;top:166.52px;font-size:11.2px;color:#505050;transform:scaleX(0.8751);">Y Scale</div>
<div class="t" style="left:1223.00px;top:166.52px;font-size:11.2px;color:#505050;transform:scaleX(0.9055);">Y Axis</div>
<div class="t" style="left:1281.80px;top:166.52px;font-size:11.2px;color:#505050;transform:scaleX(0.9619);">Plot Layout</div>
<div class="t" style="left:1366.70px;top:166.52px;font-size:11.2px;color:#505050;transform:scaleX(0.9936);">Plot Mode</div>
<div class="t" style="left:1447.30px;top:166.52px;font-size:11.2px;color:#505050;transform:scaleX(0.9771);">Hairline</div>
<div class="t" style="left:1514.30px;top:166.52px;font-size:11.2px;color:#505050;transform:scaleX(0.9762);">Hairline View</div>
<div class="t" style="left:1608.50px;top:166.52px;font-size:11.2px;color:#505050;transform:scaleX(0.8895);">Layers</div>
<div class="t" style="left:1670.50px;top:166.52px;font-size:11.2px;color:#a9a9a9;transform:scaleX(0.9904);">Info</div>
<div class="t" style="left:1705.60px;top:166.52px;font-size:11.2px;color:#505050;transform:scaleX(0.9551);">Help</div>
<svg class="r" style="left:0;top:0" width="1823" height="200" viewBox="0 0 1823 200"><polyline points="407.8,170.8 411.6,174.6 415.4,170.8" fill="none" stroke="#5c5c5c" stroke-width="2.6"/><polyline points="474.5,170.8 478.3,174.6 482.1,170.8" fill="none" stroke="#5c5c5c" stroke-width="2.6"/><polyline points="532.0,170.8 535.8,174.6 539.6,170.8" fill="none" stroke="#5c5c5c" stroke-width="2.6"/><polyline points="1196.9,170.8 1200.7,174.6 1204.5,170.8" fill="none" stroke="#5c5c5c" stroke-width="2.6"/><polyline points="1256.0,170.8 1259.8,174.6 1263.6,170.8" fill="none" stroke="#5c5c5c" stroke-width="2.6"/><polyline points="1340.6,170.8 1344.4,174.6 1348.2,170.8" fill="none" stroke="#5c5c5c" stroke-width="2.6"/><polyline points="1422.7,170.8 1426.5,174.6 1430.3,170.8" fill="none" stroke="#5c5c5c" stroke-width="2.6"/><polyline points="1489.0,170.8 1492.8,174.6 1496.6,170.8" fill="none" stroke="#5c5c5c" stroke-width="2.6"/><polyline points="1583.0,170.8 1586.8,174.6 1590.6,170.8" fill="none" stroke="#5c5c5c" stroke-width="2.6"/><polyline points="1643.0,170.8 1646.8,174.6 1650.6,170.8" fill="none" stroke="#5c5c5c" stroke-width="2.6"/><path d="M391.2 144.1 L403.6 144.1 L406.6 147.1 L406.6 159 L391.2 159 Z" fill="none" stroke="#5c5c5c" stroke-width="2.1"/><rect x="393.6" y="144.6" width="9.6" height="5" fill="#5c5c5c"/><rect x="397" y="145.4" width="2.6" height="3.4" fill="#eef1f6"/><rect x="394.4" y="153.4" width="9" height="5.4" fill="none" stroke="#5c5c5c" stroke-width="1.8"/><path d="M451.6 149.2 A7.2 7.2 0 0 1 464.2 147" fill="none" stroke="#5c5c5c" stroke-width="2.6"/><path d="M466.9 143.4 L466.9 150.6 L459.8 150.6 Z" fill="#5c5c5c"/><path d="M465 153.8 A7.2 7.2 0 0 1 452.4 156" fill="none" stroke="#5c5c5c" stroke-width="2.6"/><path d="M449.8 159.8 L449.8 152.6 L456.8 152.6 Z" fill="#5c5c5c"/><path d="M511.4 160 C510 153 513.4 147.6 522 147.6 L523.4 147.6 L523.4 143 L530.2 149.8 L523.4 156.6 L523.4 152 L521.4 152 C515.6 152 512.6 155 511.4 160 Z" fill="#5c5c5c"/><path d="M584.6 144.3 L578.2 144.3 Q576.4 144.3 576.4 146.1 L576.4 155.8 Q576.4 157.6 578.2 157.6 L588.1 157.6 Q589.9 157.6 589.9 155.8 L589.9 151.6" fill="none" stroke="#5c5c5c" stroke-width="2.1"/><line x1="584" y1="153" x2="592.4" y2="144.6" stroke="#5c5c5c" stroke-width="2.3"/><path d="M587.6 142.2 L595.2 142.2 L595.2 149.6 Z" fill="#5c5c5c"/><polyline points="637.5,154.2 642.8,148 646.2,150.4" fill="none" stroke="#5c5c5c" stroke-width="1.1"/><circle cx="637.5" cy="154.2" r="1.5" fill="#5c5c5c"/><circle cx="642.8" cy="148" r="1.4" fill="#5c5c5c"/><circle cx="649.2" cy="151.4" r="4" fill="none" stroke="#5c5c5c" stroke-width="1.1"/><circle cx="649.2" cy="151.4" r="1.1" fill="#5c5c5c"/><line x1="651.8" y1="148.4" x2="656.4" y2="143" stroke="#5c5c5c" stroke-width="1.1"/><path d="M653.6 142.6 L657.8 141 L657 145.2 Z" fill="#5c5c5c"/><line x1="652.2" y1="154.6" x2="658.4" y2="159.2" stroke="#5c5c5c" stroke-width="1.1"/><rect x="706.1" y="142.2" width="1.9" height="15.4" fill="#5c5c5c"/><rect x="729.2" y="142.2" width="1.9" height="15.4" fill="#5c5c5c"/><line x1="708.4" y1="149.9" x2="728.8" y2="149.9" stroke="#5c5c5c" stroke-width="1.7"/><polyline points="713.6,145.2 708.8,149.9 713.6,154.6" fill="none" stroke="#5c5c5c" stroke-width="1.7"/><polyline points="723.6,145.2 728.4,149.9 723.6,154.6" fill="none" stroke="#5c5c5c" stroke-width="1.7"/><rect x="796.7" y="144.3" width="21.9" height="10.3" rx="1.6" fill="#f6f6f6" stroke="#5c5c5c" stroke-width="2"/><rect x="803.4" y="145.2" width="8.6" height="8.6" fill="#c9c9cc"/><rect x="802" y="144.4" width="1.4" height="10.2" fill="#5c5c5c"/><rect x="812.6" y="144.4" width="1.4" height="10.2" fill="#5c5c5c"/><rect x="871.4" y="145.6" width="17" height="15.6" rx="1" fill="#cfe3f3" stroke="#5c5c5c" stroke-width="1.3"/><rect x="871.4" y="145.4" width="17" height="3.4" fill="#5c5c5c"/><rect x="874.4" y="142" width="2" height="5.2" rx="0.8" fill="#c3dff0" stroke="#5c5c5c" stroke-width="1"/><rect x="883" y="142" width="2" height="5.2" rx="0.8" fill="#c3dff0" stroke="#5c5c5c" stroke-width="1"/><path d="M875.6 148.8V161M879.9 148.8V161M884.2 148.8V161M871.4 152H888.4M871.4 155.2H888.4M871.4 158.2H888.4" stroke="#5c5c5c" stroke-width="0.9"/><rect x="934.4" y="143.6" width="17.8" height="14.8" rx="1.4" fill="#cfe3f3" stroke="#5c5c5c" stroke-width="1.4"/><rect x="934.4" y="143.6" width="17.8" height="2.6" fill="#5c5c5c"/><path d="M940.4 146V158.4M946.3 146V158.4M934.4 150.2H952.2M934.4 154.3H952.2" stroke="#5c5c5c" stroke-width="1.3"/><circle cx="1000.4" cy="151.6" r="6" fill="none" stroke="#5c5c5c" stroke-width="1.5"/><path d="M1000.4 143.3V148.2M1000.4 155V160M991.9 151.6H996.8M1004 151.6H1008.9" stroke="#5c5c5c" stroke-width="2.6"/><rect x="1045.4" y="140.8" width="2" height="20" fill="#a9a9a9"/><path d="M1045.4 141.8H1057.3M1045.4 147.9H1057.3M1045.4 153.8H1057.3M1045.4 160H1057.3" stroke="#a9a9a9" stroke-width="1.5"/><line x1="1115.4" y1="145" x2="1115.4" y2="158.4" stroke="#5c5c5c" stroke-width="2"/><path d="M1111 146.6 L1115.4 141.8 L1119.9 146.6 Z M1111 156.8 L1115.4 161.6 L1119.9 156.8 Z" fill="#5c5c5c"/><rect x="1177.1" y="140.8" width="2.2" height="20" fill="#5c5c5c"/><path d="M1177.1 141.8H1189M1177.1 147.9H1189M1177.1 153.8H1189M1177.1 160H1189" stroke="#5c5c5c" stroke-width="1.5"/><rect x="1238.3" y="140.8" width="1.9" height="20" fill="#5c5c5c"/><rect x="1247.9" y="140.8" width="1.9" height="20" fill="#5c5c5c"/><path d="M1238.3 141.8H1249.8M1238.3 147.9H1249.8M1238.3 153.8H1249.8M1238.3 160H1249.8" stroke="#5c5c5c" stroke-width="1.5"/><path d="M1304.7 143.1 L1306.2 143.1 L1306.2 158.7 L1327.4 158.7 L1327.4 160.2 L1304.7 160.2 Z" fill="#5c5c5c"/><polyline points="1308,156.4 1313.3,151.2 1317.4,154.3 1323.4,148" fill="none" stroke="#5c5c5c" stroke-width="2.4"/><path d="M1320.2 145.3 L1326.1 145.3 L1326.1 151 Z" fill="#5c5c5c"/><polyline points="1388.7,155.2 1390.8,144.9 1397,150.4 1400.4,144.2 1403.1,155.2 1407.2,141.5 1409.3,149" fill="none" stroke="#5c5c5c" stroke-width="2.1" stroke-linejoin="round"/><rect x="1463" y="140.9" width="2" height="20" fill="#6e6e6e"/><rect x="1463" y="140.9" width="20" height="6.2" fill="#6e6e6e"/><rect x="1542.9" y="140.9" width="2" height="20" fill="#6e6e6e"/><rect x="1542.9" y="140.9" width="20.1" height="6.2" fill="#6e6e6e"/><rect x="1542.9" y="150.6" width="20.1" height="6.1" fill="#6e6e6e"/><path d="M1630.1 152.2 L1620.1 146.2 L1630.1 140.6 L1640.1 146.2 Z" fill="#5c5c5c"/><path d="M1621.4 150.2 L1630.1 155.4 L1638.8 150.2 L1640.1 151 L1640.1 152.6 L1630.1 158.6 L1620.1 152.6 L1620.1 151 Z" fill="#5c5c5c"/><path d="M1621.4 154.6 L1630.1 159.8 L1638.8 154.6 L1640.1 155.4 L1640.1 157 L1630.1 161 L1620.1 157 L1620.1 155.4 Z" fill="#5c5c5c"/><circle cx="1679.5" cy="151.6" r="8.7" fill="#b3b3b3"/><circle cx="1679.6" cy="147.2" r="1.5" fill="#fff"/><path d="M1677.6 150 L1680.8 150 L1680.8 155.2 L1682 155.2 L1682 156.8 L1677.4 156.8 L1677.4 155.2 L1678.6 155.2 L1678.6 151.4 L1677.6 151.4 Z" fill="#fff"/><circle cx="1716.9" cy="151.6" r="8.8" fill="#555"/><path d="M1713.4 149.6 Q1713.4 145.6 1717.2 145.6 Q1720.8 145.6 1720.8 148.8 Q1720.8 150.6 1718.8 151.6 Q1718.2 152 1718.2 153 L1718.2 153.6 L1715.8 153.6 L1715.8 152.6 Q1715.8 151 1717.4 150.2 Q1718.4 149.6 1718.4 148.8 Q1718.4 147.8 1717.2 147.8 Q1715.8 147.8 1715.8 149.6 Z" fill="#fff"/><rect x="1715.8" y="154.8" width="2.4" height="2.4" fill="#fff"/></svg>
<svg class="r" style="left:0;top:0" width="1823" height="922" viewBox="0 0 1823 922"><defs><clipPath id="plotclip"><rect x="418" y="190" width="1401.5" height="640"/></clipPath><clipPath id="bandclip"><polygon points="418.0,607.0 421.1,756.8 430.7,756.8 436.3,305.2 439.8,300.7 448.4,305.2 451.3,318.6 454.5,316.1 458.0,322.0 463.7,321.5 469.5,323.8 472.4,322.6 476.2,324.3 478.7,311.9 482.5,303.6 486.8,303.6 492.5,306.5 500.2,306.5 503.7,426.0 505.4,321.5 509.2,307.5 512.7,316.7 516.0,305.2 518.4,305.2 524.8,300.0 532.8,734.0 536.7,753.3 538.6,756.8 597.5,756.8 602.8,314.8 605.5,330.0 607.5,420.0 609.6,756.8 664.3,756.8 667.2,705.0 673.0,756.8 688.3,756.8 691.2,749.5 694.5,722.2 697.9,745.7 700.8,756.8 720.0,756.8 722.9,752.0 727.7,313.8 736.3,320.5 745.9,305.2 755.5,316.7 758.4,327.2 760.0,321.5 762.0,319.5 771.5,321.5 779.2,320.5 788.8,317.2 798.4,316.7 808.0,318.6 821.4,319.5 827.2,318.6 828.1,330.0 836.8,756.8 891.5,756.8 895.3,746.6 900.1,323.4 904.0,316.7 907.8,316.7 910.7,318.6 913.5,316.7 919.3,318.6 922.2,312.8 928.9,312.3 931.8,310.0 934.7,311.5 946.2,310.0 949.0,314.8 951.9,311.5 957.7,317.6 965.4,319.5 971.1,319.9 985.5,319.5 986.0,330.0 988.4,756.8 1012.4,756.8 1013.3,754.6 1018.2,315.7 1021.0,309.0 1024.9,307.6 1026.8,315.0 1028.5,357.0 1030.6,321.5 1034.5,313.8 1037.4,313.4 1043.1,307.6 1046.0,313.8 1049.8,294.2 1052.7,293.6 1055.6,298.4 1056.5,310.0 1061.1,723.8 1067.1,309.0 1073.8,313.8 1080.5,298.0 1085.3,300.4 1086.3,310.0 1091.4,755.7 1097.4,299.4 1103.6,302.3 1107.4,333.1 1112.7,596.2 1116.9,622.8 1130.2,625.4 1132.9,598.9 1136.5,303.8 1139.8,303.2 1143.6,304.2 1146.2,343.8 1153.1,620.1 1159.4,628.1 1171.1,625.4 1176.2,756.8 1183.0,756.8 1188.7,309.0 1194.5,314.8 1199.3,309.6 1204.0,310.3 1206.9,317.6 1213.6,313.8 1218.4,306.1 1225.2,307.0 1234.8,306.1 1252.0,307.0 1255.9,309.0 1267.4,309.6 1273.1,308.4 1278.9,310.3 1285.6,310.3 1290.4,315.7 1294.3,313.8 1301.9,309.6 1309.6,313.8 1317.3,312.4 1325.0,313.2 1330.7,314.2 1344.2,312.4 1351.8,313.8 1357.6,311.5 1361.4,312.3 1369.1,316.1 1378.7,315.3 1380.6,316.1 1383.5,311.5 1386.4,314.8 1397.9,318.6 1403.7,312.8 1408.5,318.6 1413.3,313.8 1424.8,317.6 1428.6,316.1 1434.4,319.5 1440.1,307.6 1444.0,307.6 1446.9,323.4 1449.7,319.2 1453.2,323.8 1459.3,311.9 1473.9,307.9 1479.9,315.3 1483.9,310.5 1491.9,308.5 1498.8,302.5 1505.8,304.9 1511.8,306.5 1519.7,306.9 1521.7,315.0 1528.5,756.8 1528.4,756.8 1538.0,756.8 1543.6,305.2 1547.1,300.7 1555.7,305.2 1558.6,318.6 1561.8,316.1 1565.3,322.0 1571.0,321.5 1576.8,323.8 1579.7,322.6 1583.5,324.3 1586.0,311.9 1589.8,303.6 1594.1,303.6 1599.8,306.5 1607.5,306.5 1611.0,426.0 1612.7,321.5 1616.5,307.5 1620.0,316.7 1623.3,305.2 1625.7,305.2 1632.1,300.0 1640.1,734.0 1644.0,753.3 1645.9,756.8 1704.8,756.8 1710.1,314.8 1712.8,330.0 1714.8,420.0 1716.9,756.8 1771.6,756.8 1774.5,705.0 1780.3,756.8 1795.6,756.8 1798.5,749.5 1801.8,722.2 1805.2,745.7 1808.1,756.8 1827.3,756.8 1830.2,752.0 1835.0,313.8 1843.6,320.5 1853.2,305.2 1862.8,316.7 1865.7,327.2 1867.3,321.5 1869.3,319.5 1878.8,321.5 1886.5,320.5 1896.1,317.2 1905.7,316.7 1915.3,318.6 1928.7,319.5 1934.5,318.6 1935.4,330.0 1944.1,756.8 1998.8,756.8 2002.6,746.6 2007.4,323.4 2011.3,316.7 2015.1,316.7 2018.0,318.6 2020.8,316.7 2026.6,318.6 2029.5,312.8 2036.2,312.3 2039.1,310.0 2042.0,311.5 2053.5,310.0 2056.3,314.8 2059.2,311.5 2065.0,317.6 2072.7,319.5 2078.4,319.9 2092.8,319.5 2093.3,330.0 2095.7,756.8 2119.7,756.8 2120.6,754.6 2125.5,315.7 2128.3,309.0 2132.2,307.6 2134.1,315.0 2135.8,357.0 2137.9,321.5 2141.8,313.8 2144.7,313.4 2150.4,307.6 2153.3,313.8 2157.1,294.2 2160.0,293.6 2162.9,298.4 2163.8,310.0 2168.4,723.8 2174.4,309.0 2181.1,313.8 2187.8,298.0 2192.6,300.4 2193.6,310.0 2198.7,755.7 2204.7,299.4 2210.9,302.3 2214.7,333.1 2220.0,596.2 2224.2,622.8 2237.5,625.4 2240.2,598.9 2243.8,303.8 2247.1,303.2 2250.9,304.2 2253.5,343.8 2260.4,620.1 2266.7,628.1 2278.4,625.4 2283.5,756.8 2290.3,756.8 2296.0,309.0 2301.8,314.8 2306.6,309.6 2311.3,310.3 2314.2,317.6 2320.9,313.8 2325.7,306.1 2332.5,307.0 2342.1,306.1 2359.3,307.0 2363.2,309.0 2374.7,309.6 2380.4,308.4 2386.2,310.3 2392.9,310.3 2397.7,315.7 2401.6,313.8 2409.2,309.6 2416.9,313.8 2424.6,312.4 2432.3,313.2 2438.0,314.2 2451.5,312.4 2459.1,313.8 2464.9,311.5 2468.7,312.3 2476.4,316.1 2486.0,315.3 2487.9,316.1 2490.8,311.5 2493.7,314.8 2505.2,318.6 2511.0,312.8 2515.8,318.6 2520.6,313.8 2532.1,317.6 2535.9,316.1 2541.7,319.5 2547.4,307.6 2551.3,307.6 2554.2,323.4 2557.0,319.2 2560.5,323.8 2566.6,311.9 2581.2,307.9 2587.2,315.3 2591.2,310.5 2599.2,308.5 2606.1,302.5 2613.1,304.9 2619.1,306.5 2627.0,306.9 2629.0,315.0 2635.8,756.8 2635.8,756.8 2630.2,536.7 2627.0,540.9 2619.1,540.5 2613.1,538.9 2606.1,536.5 2599.2,542.5 2591.2,544.5 2587.2,549.3 2581.2,541.9 2566.6,545.9 2560.5,557.8 2557.0,553.2 2554.2,557.4 2551.3,541.6 2547.4,541.6 2541.7,553.5 2535.9,550.1 2532.1,551.6 2520.6,547.8 2515.8,552.6 2511.0,546.8 2505.2,552.6 2493.7,548.8 2490.8,545.5 2487.9,550.1 2486.0,549.3 2476.4,550.1 2468.7,546.3 2464.9,545.5 2459.1,547.8 2451.5,546.4 2438.0,548.2 2432.3,547.2 2424.6,546.4 2416.9,547.8 2409.2,543.6 2401.6,547.8 2397.7,549.7 2392.9,544.3 2386.2,544.3 2380.4,542.4 2374.7,543.6 2363.2,543.0 2359.3,541.0 2342.1,540.1 2332.5,541.0 2325.7,540.1 2320.9,547.8 2314.2,551.6 2311.3,544.3 2306.6,543.6 2301.8,548.8 2296.0,543.0 2290.7,754.6 2285.3,754.6 2278.4,621.7 2266.7,624.4 2261.4,614.8 2257.2,535.1 2254.5,480.9 2250.8,537.8 2244.4,540.4 2237.5,620.1 2226.9,617.5 2221.6,598.9 2217.3,510.3 2214.7,507.4 2210.9,541.0 2205.1,538.1 2203.0,569.7 2198.7,755.7 2196.5,580.0 2193.6,538.7 2190.7,536.2 2182.1,542.0 2178.3,547.7 2175.3,545.8 2172.1,567.0 2168.4,675.9 2165.8,560.0 2163.8,536.2 2161.0,531.8 2157.1,532.4 2154.3,543.9 2151.4,536.8 2143.7,541.0 2138.3,547.2 2135.6,518.9 2132.2,540.1 2126.0,542.9 2120.6,756.8 2095.7,756.8 2092.8,550.2 2084.2,550.2 2078.4,552.5 2068.8,551.6 2063.1,547.7 2059.2,538.1 2056.4,537.2 2049.6,540.1 2042.0,541.0 2039.1,539.5 2034.3,542.0 2030.4,543.9 2026.6,551.6 2024.7,551.6 2020.8,549.7 2018.0,551.0 2015.1,550.2 2010.3,549.7 2007.4,551.6 1998.8,756.8 1972.9,756.8 1944.1,754.3 1938.3,496.5 1935.4,546.8 1928.7,547.7 1924.9,546.8 1915.3,546.8 1907.6,547.7 1901.8,547.2 1896.1,547.7 1891.3,550.2 1886.5,551.0 1878.8,552.9 1872.1,552.9 1869.2,551.6 1867.3,554.5 1865.1,557.3 1860.9,543.9 1852.3,537.6 1844.6,545.2 1841.7,542.0 1838.2,541.0 1835.0,524.7 1827.3,756.8 1780.3,756.8 1776.4,716.9 1771.6,756.8 1716.9,756.8 1714.0,554.5 1710.8,544.5 1704.8,756.8 1694.8,756.8 1689.1,752.4 1668.9,752.4 1663.2,755.8 1647.8,755.3 1644.3,752.0 1640.3,734.0 1635.0,505.5 1632.1,533.3 1625.7,540.1 1623.3,538.7 1620.0,529.5 1616.7,536.8 1614.2,534.3 1611.0,477.3 1607.5,539.1 1599.8,538.1 1594.1,535.6 1589.9,534.9 1586.8,542.9 1583.5,558.3 1580.6,556.4 1576.8,558.3 1572.0,557.3 1566.2,558.3 1562.4,551.6 1559.1,552.9 1556.6,538.7 1547.1,533.0 1543.8,533.3 1538.3,756.0 1528.3,756.0 1528.5,756.8 1522.9,536.7 1519.7,540.9 1511.8,540.5 1505.8,538.9 1498.8,536.5 1491.9,542.5 1483.9,544.5 1479.9,549.3 1473.9,541.9 1459.3,545.9 1453.2,557.8 1449.7,553.2 1446.9,557.4 1444.0,541.6 1440.1,541.6 1434.4,553.5 1428.6,550.1 1424.8,551.6 1413.3,547.8 1408.5,552.6 1403.7,546.8 1397.9,552.6 1386.4,548.8 1383.5,545.5 1380.6,550.1 1378.7,549.3 1369.1,550.1 1361.4,546.3 1357.6,545.5 1351.8,547.8 1344.2,546.4 1330.7,548.2 1325.0,547.2 1317.3,546.4 1309.6,547.8 1301.9,543.6 1294.3,547.8 1290.4,549.7 1285.6,544.3 1278.9,544.3 1273.1,542.4 1267.4,543.6 1255.9,543.0 1252.0,541.0 1234.8,540.1 1225.2,541.0 1218.4,540.1 1213.6,547.8 1206.9,551.6 1204.0,544.3 1199.3,543.6 1194.5,548.8 1188.7,543.0 1183.4,754.6 1178.0,754.6 1171.1,621.7 1159.4,624.4 1154.1,614.8 1149.9,535.1 1147.2,480.9 1143.5,537.8 1137.1,540.4 1130.2,620.1 1119.6,617.5 1114.3,598.9 1110.0,510.3 1107.4,507.4 1103.6,541.0 1097.8,538.1 1095.7,569.7 1091.4,755.7 1089.2,580.0 1086.3,538.7 1083.4,536.2 1074.8,542.0 1071.0,547.7 1068.0,545.8 1064.8,567.0 1061.1,675.9 1058.5,560.0 1056.5,536.2 1053.7,531.8 1049.8,532.4 1047.0,543.9 1044.1,536.8 1036.4,541.0 1031.0,547.2 1028.3,518.9 1024.9,540.1 1018.7,542.9 1013.3,756.8 988.4,756.8 985.5,550.2 976.9,550.2 971.1,552.5 961.5,551.6 955.8,547.7 951.9,538.1 949.1,537.2 942.3,540.1 934.7,541.0 931.8,539.5 927.0,542.0 923.1,543.9 919.3,551.6 917.4,551.6 913.5,549.7 910.7,551.0 907.8,550.2 903.0,549.7 900.1,551.6 891.5,756.8 865.6,756.8 836.8,754.3 831.0,496.5 828.1,546.8 821.4,547.7 817.6,546.8 808.0,546.8 800.3,547.7 794.5,547.2 788.8,547.7 784.0,550.2 779.2,551.0 771.5,552.9 764.8,552.9 761.9,551.6 760.0,554.5 757.8,557.3 753.6,543.9 745.0,537.6 737.3,545.2 734.4,542.0 730.9,541.0 727.7,524.7 720.0,756.8 673.0,756.8 669.1,716.9 664.3,756.8 609.6,756.8 606.7,554.5 603.5,544.5 597.5,756.8 587.5,756.8 581.8,752.4 561.6,752.4 555.9,755.8 540.5,755.3 537.0,752.0 533.0,734.0 527.7,505.5 524.8,533.3 518.4,540.1 516.0,538.7 512.7,529.5 509.4,536.8 506.9,534.3 503.7,477.3 500.2,539.1 492.5,538.1 486.8,535.6 482.6,534.9 479.5,542.9 476.2,558.3 473.3,556.4 469.5,558.3 464.7,557.3 458.9,558.3 455.1,551.6 451.8,552.9 449.3,538.7 439.8,533.0 436.5,533.3 431.0,756.0 421.0,756.0 418.0,605.0"/></clipPath></defs><g clip-path="url(#plotclip)"><path d="M451.3 200V757M633.5 200V757M815.6 200V757M997.8 200V757M1179.9 200V757M1362.0 200V757M1544.2 200V757M1726.3 200V757M418 648.9H1820M418 541.0H1820M418 433.1H1820M418 325.2H1820M418 217.3H1820" stroke="#e3e3e3" stroke-width="1" clip-path="url(#bandclip)"/><polyline points="418.0,605.0 421.0,756.0 431.0,756.0 436.5,533.3 439.8,533.0 449.3,538.7 451.8,552.9 455.1,551.6 458.9,558.3 464.7,557.3 469.5,558.3 473.3,556.4 476.2,558.3 479.5,542.9 482.6,534.9 486.8,535.6 492.5,538.1 500.2,539.1 503.7,477.3 506.9,534.3 509.4,536.8 512.7,529.5 516.0,538.7 518.4,540.1 524.8,533.3 527.7,505.5 533.0,734.0 537.0,752.0 540.5,755.3 555.9,755.8 561.6,752.4 581.8,752.4 587.5,756.8 597.5,756.8 603.5,544.5 606.7,554.5 609.6,756.8 664.3,756.8 669.1,716.9 673.0,756.8 720.0,756.8 727.7,524.7 730.9,541.0 734.4,542.0 737.3,545.2 745.0,537.6 753.6,543.9 757.8,557.3 760.0,554.5 761.9,551.6 764.8,552.9 771.5,552.9 779.2,551.0 784.0,550.2 788.8,547.7 794.5,547.2 800.3,547.7 808.0,546.8 817.6,546.8 821.4,547.7 828.1,546.8 831.0,496.5 836.8,754.3 865.6,756.8 891.5,756.8 900.1,551.6 903.0,549.7 907.8,550.2 910.7,551.0 913.5,549.7 917.4,551.6 919.3,551.6 923.1,543.9 927.0,542.0 931.8,539.5 934.7,541.0 942.3,540.1 949.1,537.2 951.9,538.1 955.8,547.7 961.5,551.6 971.1,552.5 976.9,550.2 985.5,550.2 988.4,756.8 1013.3,756.8 1018.7,542.9 1024.9,540.1 1028.3,518.9 1031.0,547.2 1036.4,541.0 1044.1,536.8 1047.0,543.9 1049.8,532.4 1053.7,531.8 1056.5,536.2 1058.5,560.0 1061.1,675.9 1064.8,567.0 1068.0,545.8 1071.0,547.7 1074.8,542.0 1083.4,536.2 1086.3,538.7 1089.2,580.0 1091.4,755.7 1095.7,569.7 1097.8,538.1 1103.6,541.0 1107.4,507.4 1110.0,510.3 1114.3,598.9 1119.6,617.5 1130.2,620.1 1137.1,540.4 1143.5,537.8 1147.2,480.9 1149.9,535.1 1154.1,614.8 1159.4,624.4 1171.1,621.7 1178.0,754.6 1183.4,754.6 1188.7,543.0 1194.5,548.8 1199.3,543.6 1204.0,544.3 1206.9,551.6 1213.6,547.8 1218.4,540.1 1225.2,541.0 1234.8,540.1 1252.0,541.0 1255.9,543.0 1267.4,543.6 1273.1,542.4 1278.9,544.3 1285.6,544.3 1290.4,549.7 1294.3,547.8 1301.9,543.6 1309.6,547.8 1317.3,546.4 1325.0,547.2 1330.7,548.2 1344.2,546.4 1351.8,547.8 1357.6,545.5 1361.4,546.3 1369.1,550.1 1378.7,549.3 1380.6,550.1 1383.5,545.5 1386.4,548.8 1397.9,552.6 1403.7,546.8 1408.5,552.6 1413.3,547.8 1424.8,551.6 1428.6,550.1 1434.4,553.5 1440.1,541.6 1444.0,541.6 1446.9,557.4 1449.7,553.2 1453.2,557.8 1459.3,545.9 1473.9,541.9 1479.9,549.3 1483.9,544.5 1491.9,542.5 1498.8,536.5 1505.8,538.9 1511.8,540.5 1519.7,540.9 1522.9,536.7 1528.5,756.8 1528.3,756.0 1538.3,756.0 1543.8,533.3 1547.1,533.0 1556.6,538.7 1559.1,552.9 1562.4,551.6 1566.2,558.3 1572.0,557.3 1576.8,558.3 1580.6,556.4 1583.5,558.3 1586.8,542.9 1589.9,534.9 1594.1,535.6 1599.8,538.1 1607.5,539.1 1611.0,477.3 1614.2,534.3 1616.7,536.8 1620.0,529.5 1623.3,538.7 1625.7,540.1 1632.1,533.3 1635.0,505.5 1640.3,734.0 1644.3,752.0 1647.8,755.3 1663.2,755.8 1668.9,752.4 1689.1,752.4 1694.8,756.8 1704.8,756.8 1710.8,544.5 1714.0,554.5 1716.9,756.8 1771.6,756.8 1776.4,716.9 1780.3,756.8 1827.3,756.8 1835.0,524.7 1838.2,541.0 1841.7,542.0 1844.6,545.2 1852.3,537.6 1860.9,543.9 1865.1,557.3 1867.3,554.5 1869.2,551.6 1872.1,552.9 1878.8,552.9 1886.5,551.0 1891.3,550.2 1896.1,547.7 1901.8,547.2 1907.6,547.7 1915.3,546.8 1924.9,546.8 1928.7,547.7 1935.4,546.8 1938.3,496.5 1944.1,754.3 1972.9,756.8 1998.8,756.8 2007.4,551.6 2010.3,549.7 2015.1,550.2 2018.0,551.0 2020.8,549.7 2024.7,551.6 2026.6,551.6 2030.4,543.9 2034.3,542.0 2039.1,539.5 2042.0,541.0 2049.6,540.1 2056.4,537.2 2059.2,538.1 2063.1,547.7 2068.8,551.6 2078.4,552.5 2084.2,550.2 2092.8,550.2 2095.7,756.8 2120.6,756.8 2126.0,542.9 2132.2,540.1 2135.6,518.9 2138.3,547.2 2143.7,541.0 2151.4,536.8 2154.3,543.9 2157.1,532.4 2161.0,531.8 2163.8,536.2 2165.8,560.0 2168.4,675.9 2172.1,567.0 2175.3,545.8 2178.3,547.7 2182.1,542.0 2190.7,536.2 2193.6,538.7 2196.5,580.0 2198.7,755.7 2203.0,569.7 2205.1,538.1 2210.9,541.0 2214.7,507.4 2217.3,510.3 2221.6,598.9 2226.9,617.5 2237.5,620.1 2244.4,540.4 2250.8,537.8 2254.5,480.9 2257.2,535.1 2261.4,614.8 2266.7,624.4 2278.4,621.7 2285.3,754.6 2290.7,754.6 2296.0,543.0 2301.8,548.8 2306.6,543.6 2311.3,544.3 2314.2,551.6 2320.9,547.8 2325.7,540.1 2332.5,541.0 2342.1,540.1 2359.3,541.0 2363.2,543.0 2374.7,543.6 2380.4,542.4 2386.2,544.3 2392.9,544.3 2397.7,549.7 2401.6,547.8 2409.2,543.6 2416.9,547.8 2424.6,546.4 2432.3,547.2 2438.0,548.2 2451.5,546.4 2459.1,547.8 2464.9,545.5 2468.7,546.3 2476.4,550.1 2486.0,549.3 2487.9,550.1 2490.8,545.5 2493.7,548.8 2505.2,552.6 2511.0,546.8 2515.8,552.6 2520.6,547.8 2532.1,551.6 2535.9,550.1 2541.7,553.5 2547.4,541.6 2551.3,541.6 2554.2,557.4 2557.0,553.2 2560.5,557.8 2566.6,545.9 2581.2,541.9 2587.2,549.3 2591.2,544.5 2599.2,542.5 2606.1,536.5 2613.1,538.9 2619.1,540.5 2627.0,540.9 2630.2,536.7 2635.8,756.8" fill="none" stroke="#555" stroke-width="1.1" stroke-linejoin="round"/><polyline points="418.0,607.0 421.1,756.8 430.7,756.8 436.3,305.2 439.8,300.7 448.4,305.2 451.3,318.6 454.5,316.1 458.0,322.0 463.7,321.5 469.5,323.8 472.4,322.6 476.2,324.3 478.7,311.9 482.5,303.6 486.8,303.6 492.5,306.5 500.2,306.5 503.7,426.0 505.4,321.5 509.2,307.5 512.7,316.7 516.0,305.2 518.4,305.2 524.8,300.0 532.8,734.0 536.7,753.3 538.6,756.8 597.5,756.8 602.8,314.8 605.5,330.0 607.5,420.0 609.6,756.8 664.3,756.8 667.2,705.0 673.0,756.8 688.3,756.8 691.2,749.5 694.5,722.2 697.9,745.7 700.8,756.8 720.0,756.8 722.9,752.0 727.7,313.8 736.3,320.5 745.9,305.2 755.5,316.7 758.4,327.2 760.0,321.5 762.0,319.5 771.5,321.5 779.2,320.5 788.8,317.2 798.4,316.7 808.0,318.6 821.4,319.5 827.2,318.6 828.1,330.0 836.8,756.8 891.5,756.8 895.3,746.6 900.1,323.4 904.0,316.7 907.8,316.7 910.7,318.6 913.5,316.7 919.3,318.6 922.2,312.8 928.9,312.3 931.8,310.0 934.7,311.5 946.2,310.0 949.0,314.8 951.9,311.5 957.7,317.6 965.4,319.5 971.1,319.9 985.5,319.5 986.0,330.0 988.4,756.8 1012.4,756.8 1013.3,754.6 1018.2,315.7 1021.0,309.0 1024.9,307.6 1026.8,315.0 1028.5,357.0 1030.6,321.5 1034.5,313.8 1037.4,313.4 1043.1,307.6 1046.0,313.8 1049.8,294.2 1052.7,293.6 1055.6,298.4 1056.5,310.0 1061.1,723.8 1067.1,309.0 1073.8,313.8 1080.5,298.0 1085.3,300.4 1086.3,310.0 1091.4,755.7 1097.4,299.4 1103.6,302.3 1107.4,333.1 1112.7,596.2 1116.9,622.8 1130.2,625.4 1132.9,598.9 1136.5,303.8 1139.8,303.2 1143.6,304.2 1146.2,343.8 1153.1,620.1 1159.4,628.1 1171.1,625.4 1176.2,756.8 1183.0,756.8 1188.7,309.0 1194.5,314.8 1199.3,309.6 1204.0,310.3 1206.9,317.6 1213.6,313.8 1218.4,306.1 1225.2,307.0 1234.8,306.1 1252.0,307.0 1255.9,309.0 1267.4,309.6 1273.1,308.4 1278.9,310.3 1285.6,310.3 1290.4,315.7 1294.3,313.8 1301.9,309.6 1309.6,313.8 1317.3,312.4 1325.0,313.2 1330.7,314.2 1344.2,312.4 1351.8,313.8 1357.6,311.5 1361.4,312.3 1369.1,316.1 1378.7,315.3 1380.6,316.1 1383.5,311.5 1386.4,314.8 1397.9,318.6 1403.7,312.8 1408.5,318.6 1413.3,313.8 1424.8,317.6 1428.6,316.1 1434.4,319.5 1440.1,307.6 1444.0,307.6 1446.9,323.4 1449.7,319.2 1453.2,323.8 1459.3,311.9 1473.9,307.9 1479.9,315.3 1483.9,310.5 1491.9,308.5 1498.8,302.5 1505.8,304.9 1511.8,306.5 1519.7,306.9 1521.7,315.0 1528.5,756.8 1528.4,756.8 1538.0,756.8 1543.6,305.2 1547.1,300.7 1555.7,305.2 1558.6,318.6 1561.8,316.1 1565.3,322.0 1571.0,321.5 1576.8,323.8 1579.7,322.6 1583.5,324.3 1586.0,311.9 1589.8,303.6 1594.1,303.6 1599.8,306.5 1607.5,306.5 1611.0,426.0 1612.7,321.5 1616.5,307.5 1620.0,316.7 1623.3,305.2 1625.7,305.2 1632.1,300.0 1640.1,734.0 1644.0,753.3 1645.9,756.8 1704.8,756.8 1710.1,314.8 1712.8,330.0 1714.8,420.0 1716.9,756.8 1771.6,756.8 1774.5,705.0 1780.3,756.8 1795.6,756.8 1798.5,749.5 1801.8,722.2 1805.2,745.7 1808.1,756.8 1827.3,756.8 1830.2,752.0 1835.0,313.8 1843.6,320.5 1853.2,305.2 1862.8,316.7 1865.7,327.2 1867.3,321.5 1869.3,319.5 1878.8,321.5 1886.5,320.5 1896.1,317.2 1905.7,316.7 1915.3,318.6 1928.7,319.5 1934.5,318.6 1935.4,330.0 1944.1,756.8 1998.8,756.8 2002.6,746.6 2007.4,323.4 2011.3,316.7 2015.1,316.7 2018.0,318.6 2020.8,316.7 2026.6,318.6 2029.5,312.8 2036.2,312.3 2039.1,310.0 2042.0,311.5 2053.5,310.0 2056.3,314.8 2059.2,311.5 2065.0,317.6 2072.7,319.5 2078.4,319.9 2092.8,319.5 2093.3,330.0 2095.7,756.8 2119.7,756.8 2120.6,754.6 2125.5,315.7 2128.3,309.0 2132.2,307.6 2134.1,315.0 2135.8,357.0 2137.9,321.5 2141.8,313.8 2144.7,313.4 2150.4,307.6 2153.3,313.8 2157.1,294.2 2160.0,293.6 2162.9,298.4 2163.8,310.0 2168.4,723.8 2174.4,309.0 2181.1,313.8 2187.8,298.0 2192.6,300.4 2193.6,310.0 2198.7,755.7 2204.7,299.4 2210.9,302.3 2214.7,333.1 2220.0,596.2 2224.2,622.8 2237.5,625.4 2240.2,598.9 2243.8,303.8 2247.1,303.2 2250.9,304.2 2253.5,343.8 2260.4,620.1 2266.7,628.1 2278.4,625.4 2283.5,756.8 2290.3,756.8 2296.0,309.0 2301.8,314.8 2306.6,309.6 2311.3,310.3 2314.2,317.6 2320.9,313.8 2325.7,306.1 2332.5,307.0 2342.1,306.1 2359.3,307.0 2363.2,309.0 2374.7,309.6 2380.4,308.4 2386.2,310.3 2392.9,310.3 2397.7,315.7 2401.6,313.8 2409.2,309.6 2416.9,313.8 2424.6,312.4 2432.3,313.2 2438.0,314.2 2451.5,312.4 2459.1,313.8 2464.9,311.5 2468.7,312.3 2476.4,316.1 2486.0,315.3 2487.9,316.1 2490.8,311.5 2493.7,314.8 2505.2,318.6 2511.0,312.8 2515.8,318.6 2520.6,313.8 2532.1,317.6 2535.9,316.1 2541.7,319.5 2547.4,307.6 2551.3,307.6 2554.2,323.4 2557.0,319.2 2560.5,323.8 2566.6,311.9 2581.2,307.9 2587.2,315.3 2591.2,310.5 2599.2,308.5 2606.1,302.5 2613.1,304.9 2619.1,306.5 2627.0,306.9 2629.0,315.0 2635.8,756.8" fill="none" stroke="#f8a733" stroke-width="1.15" stroke-linejoin="round"/></g><line x1="375.5" y1="190" x2="375.5" y2="831" stroke="#d0d0d0" stroke-width="1"/><path d="M928.3 740.2 L928.3 755.4 L931.6 752.4 L934.6 758.2 L936.6 757.2 L934 751.6 L939.6 751.6 Z" fill="#fff" stroke="#444" stroke-width="0.9" stroke-linejoin="round"/></svg>
<div class="t" style="left:411.20px;top:751.86px;font-size:10.8px;color:#666;transform:scaleX(0.8991);">0</div>
<div class="t" style="left:391.30px;top:643.96px;font-size:10.8px;color:#666;transform:scaleX(0.9362);">2,000</div>
<div class="t" style="left:391.30px;top:536.06px;font-size:10.8px;color:#666;transform:scaleX(0.9362);">4,000</div>
<div class="t" style="left:391.30px;top:428.16px;font-size:10.8px;color:#666;transform:scaleX(0.9362);">6,000</div>
<div class="t" style="left:391.30px;top:320.26px;font-size:10.8px;color:#666;transform:scaleX(0.9362);">8,000</div>
<div class="t" style="left:386.20px;top:212.36px;font-size:10.8px;color:#666;transform:scaleX(0.9204);">10,000</div>
<div class="t" style="left:436.80px;top:762.06px;font-size:10.8px;color:#555;transform:scaleX(0.9929);">07 AM</div>
<div class="t" style="left:618.95px;top:762.06px;font-size:10.8px;color:#555;transform:scaleX(0.9929);">08 AM</div>
<div class="t" style="left:801.10px;top:762.06px;font-size:10.8px;color:#555;transform:scaleX(0.9929);">09 AM</div>
<div class="t" style="left:983.25px;top:762.06px;font-size:10.8px;color:#555;transform:scaleX(0.9929);">10 AM</div>
<div class="t" style="left:1165.40px;top:762.06px;font-size:10.8px;color:#555;transform:scaleX(1.0196);">11 AM</div>
<div class="t" style="left:1347.55px;top:762.06px;font-size:10.8px;color:#555;transform:scaleX(0.9740);">12 PM</div>
<div class="t" style="left:1529.70px;top:762.06px;font-size:10.8px;color:#555;transform:scaleX(0.9740);">01 PM</div>
<div class="t" style="left:1711.85px;top:762.06px;font-size:10.8px;color:#555;transform:scaleX(0.9740);">02 PM</div>
<svg class="r" style="left:0;top:780px" width="1823" height="50" viewBox="0 780 1823 50"><polyline points="393.2,800.8 385.6,807.9 393.2,815" fill="none" stroke="#9a9a9a" stroke-width="3.2"/><polyline points="1809.4,800.8 1817,807.9 1809.4,815" fill="none" stroke="#9a9a9a" stroke-width="3.2"/></svg>
<div class="r" style="left:404.2px;top:797.3px;width:116.4px;height:22.3px;background:#cde0ef;border:1px solid #98b3c9;border-radius:3px;box-sizing:border-box;"></div>
<div class="r" style="left:498.4px;top:798.3px;width:21.2px;height:20.3px;background:#b8cfe2;border-left:1px solid #98b3c9;border-radius:0 2px 2px 0;box-sizing:border-box;"></div>
<div class="t" style="left:410.60px;top:804.55px;font-size:10.1px;color:#333;transform:scaleX(0.9225);">Feb 01, 21 06:49:00</div>
<svg class="r" style="left:504.4px;top:802.6px" width="11" height="11" viewBox="0 0 11 11"><rect x="0.8" y="2.2" width="9.4" height="8.2" fill="#c8d8ea" stroke="#3a4a60" stroke-width="1"/><rect x="0.8" y="2.2" width="9.4" height="2" fill="#3a4a60"/><rect x="2.6" y="0.4" width="1.3" height="3" fill="#3a4a60"/><rect x="7.1" y="0.4" width="1.3" height="3" fill="#3a4a60"/><path d="M3.2 4.2V10.4M5.5 4.2V10.4M7.8 4.2V10.4M0.8 6.4H10.2M0.8 8.4H10.2" stroke="#3a4a60" stroke-width="0.6"/></svg>
<div class="r" style="left:879.6px;top:796.6px;width:27.6px;height:13.7px;background:#3b78c4;border-radius:7px;"></div>
<div class="r" style="left:894.2px;top:797.9px;width:11.4px;height:11.2px;background:#fff;border-radius:6px;"></div>
<div class="t" style="left:866.80px;top:813.13px;font-size:10px;color:#333;transform:scaleX(0.9406);">Fixed Period</div>
<div class="r" style="left:933.8px;top:796.6px;width:90.2px;height:23.2px;background:#cde0ef;border:1px solid #8eaec6;border-radius:3px;box-sizing:border-box;"></div>
<div class="t" style="left:942.30px;top:803.77px;font-size:10.2px;color:#444;transform:scaleX(0.9520);">8 Hours</div>
<div class="r" style="left:1027.4px;top:797px;width:77.8px;height:22.8px;background:#fff;border:1px solid #dedede;border-radius:3px;box-sizing:border-box;"></div>
<div class="t" style="left:1051.55px;top:802.43px;font-size:13.2px;color:#9a9a9a;transform:scaleX(1.1012);">Auto</div>
<div class="r" style="left:1109px;top:796.6px;width:86.4px;height:23.2px;background:#fff;border:1px solid #c4c4c4;border-radius:3px;box-sizing:border-box;"></div>
<div class="t" style="left:1117.60px;top:803.77px;font-size:10.2px;color:#444;transform:scaleX(0.9893);">1 Minute</div>
<div class="r" style="left:1199.3px;top:796.6px;width:107px;height:23.2px;background:#fff;border:1px solid #c4c4c4;border-radius:3px;box-sizing:border-box;"></div>
<div class="t" style="left:1207.00px;top:803.77px;font-size:10.2px;color:#444;transform:scaleX(0.9523);">Average</div>
<svg class="r" style="left:0;top:0" width="1823" height="922" viewBox="0 0 1823 922"><path d="M1008.5 804.6 L1015.5 804.6 L1012.0 810.6 Z" fill="#222"/><path d="M1181.2 804.6 L1188.2 804.6 L1184.7 810.6 Z" fill="#222"/><path d="M1291.8 804.6 L1298.8 804.6 L1295.3 810.6 Z" fill="#222"/></svg>
<div class="r" style="left:1656.6px;top:797.2px;width:115.9px;height:22.4px;background:#fff;border:1px solid #bdbdbd;border-radius:3px;box-sizing:border-box;"></div>
<div class="r" style="left:1751.4px;top:798.2px;width:20.1px;height:20.4px;background:#e3e7ed;border-left:1px solid #bdbdbd;border-radius:0 2px 2px 0;box-sizing:border-box;"></div>
<div class="t" style="left:1662.90px;top:804.55px;font-size:10.1px;color:#333;transform:scaleX(0.9181);">Feb 01, 21 14:49:00</div>
<svg class="r" style="left:1756.3px;top:802.6px" width="11" height="11" viewBox="0 0 11 11"><rect x="0.8" y="2.2" width="9.4" height="8.2" fill="#dfe6ee" stroke="#3a4a60" stroke-width="1"/><rect x="0.8" y="2.2" width="9.4" height="2" fill="#3a4a60"/><rect x="2.6" y="0.4" width="1.3" height="3" fill="#3a4a60"/><rect x="7.1" y="0.4" width="1.3" height="3" fill="#3a4a60"/><path d="M3.2 4.2V10.4M5.5 4.2V10.4M7.8 4.2V10.4M0.8 6.4H10.2M0.8 8.4H10.2" stroke="#3a4a60" stroke-width="0.6"/></svg>
<div class="r" style="left:1786px;top:797.2px;width:12.6px;height:11.4px;background:#fff;border:1px solid #c0c0c0;border-radius:3px;box-sizing:border-box;"></div>
<div class="t" style="left:1783.00px;top:810.93px;font-size:10px;color:#444;transform:scaleX(0.9498);">Now</div>
<div class="r" style="left:370px;top:839.9px;width:1449px;height:83px;background:#eef1f5;"></div>
<div class="r" style="left:374.7px;top:843.4px;width:1446px;height:80px;background:#fff;border-top:1px solid #d9d9d9;border-left:1px solid #d9d9d9;border-radius:4px 0 0 0;box-sizing:border-box;"></div>
<div class="t" style="left:380.50px;top:853.39px;font-size:11px;color:#444;transform:scaleX(0.9424);">Y-Axis</div>
<div class="t" style="left:487.50px;top:853.39px;font-size:11px;color:#444;transform:scaleX(0.9645);">Name</div>
<div class="t" style="left:802.60px;top:853.39px;font-size:11px;color:#444;transform:scaleX(1.0360);">Description</div>
<div class="t" style="left:1332.10px;top:853.39px;font-size:11px;color:#444;transform:scaleX(0.9884);">Value</div>
<div class="t" style="left:1471.50px;top:853.39px;font-size:11px;color:#444;">Units</div>
<div class="t" style="left:1551.00px;top:853.39px;font-size:11px;color:#444;transform:scaleX(1.0382);">Min</div>
<div class="t" style="left:1655.70px;top:853.39px;font-size:11px;color:#444;transform:scaleX(0.9865);">Max</div>
<div class="r" style="left:375.5px;top:870.6px;width:1444px;height:1px;background:#e3e3e3;"></div>
<div class="r" style="left:375.5px;top:896.8px;width:1444px;height:1px;background:#e3e3e3;"></div>
<div class="r" style="left:414.1px;top:871.5px;width:1px;height:52px;background:#e6e6e6;"></div>
<div class="r" style="left:438.6px;top:871.5px;width:1px;height:52px;background:#e6e6e6;"></div>
<div class="r" style="left:462.5px;top:871.5px;width:1px;height:52px;background:#e6e6e6;"></div>
<div class="r" style="left:481.8px;top:871.5px;width:1px;height:52px;background:#e6e6e6;"></div>
<div class="r" style="left:796.6px;top:871.5px;width:1px;height:52px;background:#e6e6e6;"></div>
<div class="r" style="left:1326.8px;top:871.5px;width:1px;height:52px;background:#e6e6e6;"></div>
<div class="r" style="left:1466.5px;top:871.5px;width:1px;height:52px;background:#e6e6e6;"></div>
<div class="r" style="left:1544.8px;top:871.5px;width:1px;height:52px;background:#e6e6e6;"></div>
<div class="r" style="left:1649.5px;top:871.5px;width:1px;height:52px;background:#e6e6e6;"></div>
<div class="r" style="left:1755.0px;top:871.5px;width:1px;height:52px;background:#e6e6e6;"></div>
<div class="r" style="left:1778.5px;top:871.5px;width:1px;height:52px;background:#e6e6e6;"></div>
<div class="r" style="left:1802.9px;top:871.5px;width:1px;height:52px;background:#e6e6e6;"></div>
<div class="r" style="left:377.2px;top:877.8px;width:17.7px;height:13.7px;background:#b9dcef;"></div>
<div class="t" style="left:382.66px;top:879.93px;font-size:10.6px;color:#2a2a2a;font-weight:bold;">L</div>
<div class="t" style="left:400.24px;top:879.70px;font-size:10.4px;color:#555;">R</div>
<div class="r" style="left:418.5px;top:876px;width:17.7px;height:17.3px;background:#444444;box-shadow:inset 0 0 0 0.6px rgba(0,0,0,0.25);"></div>
<div class="r" style="left:486.2px;top:874.3px;width:245.8px;height:20.3px;background:#fff;border:1px solid #cfcfcf;border-radius:4px;box-sizing:border-box;"></div>
<div class="r" style="left:716px;top:875.3px;width:1px;height:18.3px;background:#dadada;"></div>
<div class="t" style="left:504.90px;top:879.19px;font-size:11px;color:#444;transform:scaleX(0.9454);">Breaker Ranch A Unit A 1h → SCADA Data...</div>
<div class="t" style="left:776.60px;top:878.50px;font-size:13px;color:#555;font-style:italic;transform:scaleX(1.4340);font-family:"Liberation Serif",serif;">fx</div>
<div class="t" style="left:1330.00px;top:879.19px;font-size:11px;color:#444;transform:scaleX(0.9407);">3787.70</div>
<div class="t" style="left:1553.90px;top:879.19px;font-size:11px;color:#555;transform:scaleX(0.9809);">0</div>
<div class="t" style="left:1660.20px;top:879.19px;font-size:11px;color:#707070;transform:scaleX(0.9089);">10000</div>
<div class="r" style="left:377.2px;top:904.4px;width:17.7px;height:13.7px;background:#b9dcef;"></div>
<div class="t" style="left:382.66px;top:906.53px;font-size:10.6px;color:#2a2a2a;font-weight:bold;">L</div>
<div class="t" style="left:400.24px;top:906.30px;font-size:10.4px;color:#555;">R</div>
<div class="r" style="left:418.5px;top:902.6px;width:17.7px;height:17.3px;background:#ff9900;box-shadow:inset 0 0 0 0.6px rgba(0,0,0,0.25);"></div>
<div class="r" style="left:486.2px;top:900.9px;width:245.8px;height:20.3px;background:#fff;border:1px solid #cfcfcf;border-radius:4px;box-sizing:border-box;"></div>
<div class="r" style="left:716px;top:901.9px;width:1px;height:18.3px;background:#dadada;"></div>
<div class="t" style="left:504.90px;top:905.79px;font-size:11px;color:#444;transform:scaleX(0.9454);">Breaker Ranch A Unit A 1h → SCADA Data...</div>
<div class="t" style="left:776.60px;top:905.10px;font-size:13px;color:#555;font-style:italic;transform:scaleX(1.4340);font-family:"Liberation Serif",serif;">fx</div>
<div class="t" style="left:1330.00px;top:905.79px;font-size:11px;color:#444;transform:scaleX(0.9407);">8093.60</div>
<div class="t" style="left:1553.90px;top:905.79px;font-size:11px;color:#555;transform:scaleX(0.9809);">0</div>
<div class="t" style="left:1660.20px;top:905.79px;font-size:11px;color:#707070;transform:scaleX(0.9089);">10000</div>
<svg class="r" style="left:0;top:0" width="1823" height="922" viewBox="0 0 1823 922"><polyline points="442.6,891.6 447.6,885.6 451,888.8 458.6,880.4" fill="none" stroke="#111" stroke-width="1.6"/><rect x="466.6" y="878.2" width="12.5" height="12.9" rx="2.2" fill="#6a6a6a"/><polyline points="469,884.8 471.8,887.8 476.8,881.2" fill="none" stroke="#fff" stroke-width="1.9"/><path d="M721 882.2 L725.6 886.8 M725.6 882.2 L721 886.8" stroke="#444" stroke-width="1"/><circle cx="497.5" cy="884.6" r="3.6" fill="#999"/><path d="M500.90 884.60L502.80 884.60M499.90 887.00L501.25 888.35M497.50 888.00L497.50 889.90M495.10 887.00L493.75 888.35M494.10 884.60L492.20 884.60M495.10 882.20L493.75 880.85M497.50 881.20L497.50 879.30M499.90 882.20L501.25 880.85" stroke="#a0a0a0" stroke-width="0.8"/><circle cx="744.2" cy="885.3" r="6.2" fill="#555"/><circle cx="744.3" cy="882.2" r="1.1" fill="#fff"/><path d="M742.8 884.0 H745.2 V888.0 H746.1 V889.1 H742.6 V888.0 H743.4 V885.0 H742.8 Z" fill="#fff"/><path d="M757.4 891.2 L758.2 887.2 L766.6 878.8 Q767.6 877.8 768.6 878.8 L769.6 879.8 Q770.6 880.8 769.6 881.8 L761.2 890.2 Z" fill="#555"/><path d="M758.6 887.4 L761 889.8" stroke="#fff" stroke-width="0.7"/><path d="M1640.2 880.2 L1646.4 886.0 M1646.4 880.2 L1640.2 886.0" stroke="#111" stroke-width="2"/><path d="M1743 878.0 L1750 884.8 M1750 878.0 L1743 884.8" stroke="#111" stroke-width="2.2"/><line x1="1767.6" y1="879.6" x2="1767.6" y2="887.2" stroke="#111" stroke-width="1.5"/><path d="M1765 880.0 L1767.6 877.0 L1770.2 880.0 Z M1765 886.8 L1767.6 889.8 L1770.2 886.8 Z" fill="#111"/><path d="M1810 879.2 H1820.6 M1813.4 879.2 V877.2 H1817.2 V879.2" fill="none" stroke="#222" stroke-width="1"/><rect x="1810.8" y="880.0" width="9" height="10.6" rx="0.8" fill="none" stroke="#222" stroke-width="1.2"/><path d="M1813.4 881.8V888.8M1815.3 881.8V888.8M1817.2 881.8V888.8" stroke="#444" stroke-width="0.9"/><polyline points="442.6,918.2 447.6,912.2 451,915.4 458.6,907.0" fill="none" stroke="#111" stroke-width="1.6"/><rect x="466.6" y="904.8" width="12.5" height="12.9" rx="2.2" fill="#6a6a6a"/><polyline points="469,911.4 471.8,914.4 476.8,907.8" fill="none" stroke="#fff" stroke-width="1.9"/><path d="M721 908.8 L725.6 913.4 M725.6 908.8 L721 913.4" stroke="#444" stroke-width="1"/><circle cx="497.5" cy="911.2" r="3.6" fill="#999"/><path d="M500.90 911.20L502.80 911.20M499.90 913.60L501.25 914.95M497.50 914.60L497.50 916.50M495.10 913.60L493.75 914.95M494.10 911.20L492.20 911.20M495.10 908.80L493.75 907.45M497.50 907.80L497.50 905.90M499.90 908.80L501.25 907.45" stroke="#a0a0a0" stroke-width="0.8"/><circle cx="744.2" cy="911.9" r="6.2" fill="#555"/><circle cx="744.3" cy="908.8" r="1.1" fill="#fff"/><path d="M742.8 910.6 H745.2 V914.6 H746.1 V915.7 H742.6 V914.6 H743.4 V911.6 H742.8 Z" fill="#fff"/><path d="M757.4 917.8 L758.2 913.8 L766.6 905.4 Q767.6 904.4 768.6 905.4 L769.6 906.4 Q770.6 907.4 769.6 908.4 L761.2 916.8 Z" fill="#555"/><path d="M758.6 914.0 L761 916.4" stroke="#fff" stroke-width="0.7"/><path d="M1640.2 906.8 L1646.4 912.6 M1646.4 906.8 L1640.2 912.6" stroke="#111" stroke-width="2"/><path d="M1743 904.6 L1750 911.4 M1750 904.6 L1743 911.4" stroke="#111" stroke-width="2.2"/><line x1="1767.6" y1="906.2" x2="1767.6" y2="913.8" stroke="#111" stroke-width="1.5"/><path d="M1765 906.6 L1767.6 903.6 L1770.2 906.6 Z M1765 913.4 L1767.6 916.4 L1770.2 913.4 Z" fill="#111"/><path d="M1810 905.8 H1820.6 M1813.4 905.8 V903.8 H1817.2 V905.8" fill="none" stroke="#222" stroke-width="1"/><rect x="1810.8" y="906.6" width="9" height="10.6" rx="0.8" fill="none" stroke="#222" stroke-width="1.2"/><path d="M1813.4 908.4V915.4M1815.3 908.4V915.4M1817.2 908.4V915.4" stroke="#444" stroke-width="0.9"/></svg>
</body></html>
